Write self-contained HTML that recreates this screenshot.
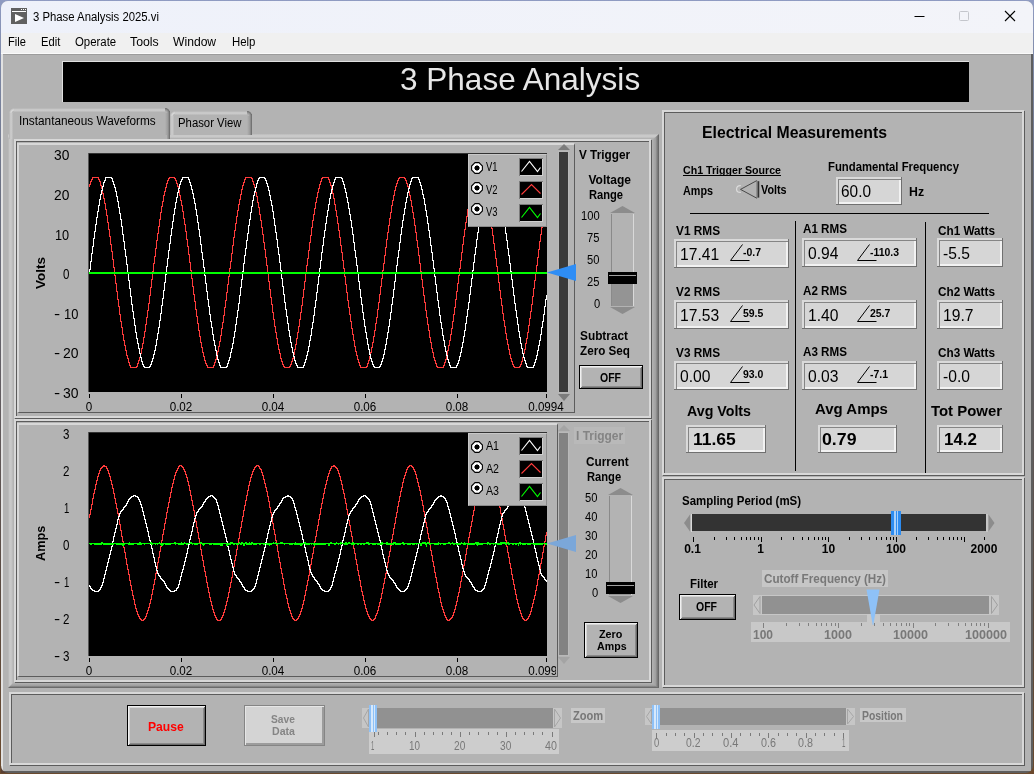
<!DOCTYPE html>
<html lang="en"><head><meta charset="utf-8"><title>3 Phase Analysis 2025.vi</title>
<style>
html,body{margin:0;padding:0;}
body{width:1034px;height:774px;overflow:hidden;position:relative;background:#6b4a32;font-family:"Liberation Sans", sans-serif;}
div,span.t,svg{position:absolute;box-sizing:content-box;}
span.t{white-space:nowrap;line-height:1;}
.fr{border:2px solid #d8d8d8;box-shadow:1px 1px 0 0 #5c5c5c, inset 1px 1px 0 0 #5c5c5c;}
.btn{background:#b3b3b3;border:1px solid #000;box-shadow:inset 1px 1px 0 0 #f0f0f0, inset -1px -1px 0 0 #6a6a6a, inset 2px 2px 0 0 #d4d4d4, inset -2px -2px 0 0 #8a8a8a;}
</style></head>
<body>
<div style="left:0px;top:0px;width:1034px;height:774px;background:linear-gradient(180deg,#8f9bc2 0,#7f8aa8 60px,#6a6f80 200px,#5a4a40 600px,#6b4a2e 100%);"></div>
<div class="win" style="left:1px;top:1px;width:1032px;height:772px;background:#b3b3b3;border-radius:7px;overflow:hidden;"></div>
<div style="left:1px;top:1px;width:1032px;height:32px;background:linear-gradient(90deg,#eef1fa,#f3f4f9);border-radius:7px 7px 0 0;"></div>
<div style="left:1px;top:33px;width:1032px;height:20px;background:#f0f0f0;"></div>
<div style="left:1px;top:53px;width:1032px;height:1px;background:#fafafa;"></div>
<div style="left:3px;top:54px;width:1028px;height:1px;background:#9c9c9c;"></div>
<div style="left:1px;top:54px;width:2px;height:718px;background:#e2e2e2;"></div>
<div style="left:1031px;top:54px;width:2px;height:718px;background:#5e5e5e;"></div>
<div style="left:3px;top:771px;width:1030px;height:2px;background:#5e5e5e;"></div>
<svg style="left:11px;top:8px;" width="16" height="16" viewBox="0 0 16 16"><rect x="0" y="0" width="16" height="16" fill="#606060"/><rect x="1" y="3" width="14" height="1" fill="#fff"/><rect x="10" y="1" width="1" height="1" fill="#fff"/><rect x="12" y="1" width="1" height="1" fill="#fff"/><rect x="14" y="1" width="1" height="1" fill="#fff"/><path d="M4 6 L13 10 L4 14 Z" fill="#fff"/></svg>
<span class="t" style="left:33.30px;top:11px;font-size:12px;font-weight:400;color:#000;transform:scaleX(0.9440);transform-origin:0 0;">3 Phase Analysis 2025.vi</span>
<svg style="left:913px;top:9px;" width="14" height="14" viewBox="0 0 14 14"><path d="M1.5 7.5 H11.5" stroke="#000" stroke-width="1" fill="none"/></svg>
<svg style="left:958px;top:10px;" width="14" height="14" viewBox="0 0 14 14"><rect x="1.5" y="1.5" width="9" height="9" rx="1" stroke="#c4c6cc" stroke-width="1" fill="none"/></svg>
<svg style="left:1003px;top:9px;" width="14" height="14" viewBox="0 0 14 14"><path d="M2 2 L12 12 M12 2 L2 12" stroke="#000" stroke-width="1.1" fill="none"/></svg>
<span class="t" style="left:8.30px;top:36px;font-size:12px;font-weight:400;color:#000;transform:scaleX(0.9239);transform-origin:0 0;">File</span>
<span class="t" style="left:40.80px;top:36px;font-size:12px;font-weight:400;color:#000;transform:scaleX(0.9309);transform-origin:0 0;">Edit</span>
<span class="t" style="left:74.60px;top:36px;font-size:12px;font-weight:400;color:#000;transform:scaleX(0.9499);transform-origin:0 0;">Operate</span>
<span class="t" style="left:130.40px;top:36px;font-size:12px;font-weight:400;color:#000;transform:scaleX(1.0250);transform-origin:0 0;">Tools</span>
<span class="t" style="left:173.30px;top:36px;font-size:12px;font-weight:400;color:#000;transform:scaleX(1.0105);transform-origin:0 0;">Window</span>
<span class="t" style="left:231.80px;top:36px;font-size:12px;font-weight:400;color:#000;transform:scaleX(0.9503);transform-origin:0 0;">Help</span>
<div style="left:62px;top:61px;width:907px;height:41px;background:#000;border-left:1px solid #e0e0e0;border-top:1px solid #e0e0e0;box-sizing:border-box;"></div>
<span class="t" style="left:400.30px;top:63px;font-size:32px;font-weight:400;color:#e6e6e6;transform:scaleX(0.9854);transform-origin:0 0;">3 Phase Analysis</span>
<div style="left:8px;top:134px;width:651px;height:554px;background:#b3b3b3;"><div style="left:0;top:0;width:5px;height:554px;background:linear-gradient(90deg,#b3b3b3,#c6c6c6 30%,#cacaca 60%,#b6b6b6);"></div><div style="left:0;top:0;width:651px;height:4px;background:linear-gradient(180deg,#bababa,#c9c9c9 35%,#c9c9c9 75%,#b8b8b8);"></div><div style="left:644px;top:0;width:7px;height:554px;background:linear-gradient(90deg,#b3b3b3,#a0a0a0 50%,#5e5e5e);clip-path:polygon(0 6px,100% 0,100% 100%,0 100%);"></div><div style="left:0;top:549px;width:651px;height:5px;background:linear-gradient(180deg,#b3b3b3,#a0a0a0 50%,#5e5e5e);clip-path:polygon(5px 0,644px 0,651px 5px,0 5px);"></div></div>
<div style="left:170px;top:111px;width:82px;height:24px;"><div style="left:0;top:0;width:82px;height:24px;background:#b3b3b3;border-radius:4px 4px 0 0;"></div><div style="left:0;top:3px;width:4px;height:21px;background:linear-gradient(90deg,#b3b3b3,#cfcfcf 50%,#b8b8b8);"></div><div style="left:3px;top:0;width:75px;height:4px;background:linear-gradient(180deg,#b3b3b3,#cfcfcf 50%,#b8b8b8);"></div><div style="left:0;top:0;width:5px;height:5px;border-radius:5px 0 0 0;background:radial-gradient(circle at 5px 5px,#b6b6b6 1.5px,#dadada 3px,#b3b3b3 5px);"></div><div style="left:77px;top:3px;width:5px;height:21px;background:linear-gradient(90deg,#b3b3b3,#9a9a9a 60%,#666);"></div><div style="left:77px;top:0;width:5px;height:5px;border-radius:0 5px 0 0;background:radial-gradient(circle at 0 5px,#b3b3b3 1.5px,#9a9a9a 3px,#666 5px);"></div></div>
<span class="t" style="left:178.40px;top:117px;font-size:12px;font-weight:400;color:#000;transform:scaleX(0.9457);transform-origin:0 0;">Phasor View</span>
<div style="left:9px;top:108px;width:161px;height:31px;"><div style="left:0;top:0;width:161px;height:31px;background:#b3b3b3;border-radius:4px 4px 0 0;"></div><div style="left:0;top:3px;width:4px;height:28px;background:linear-gradient(90deg,#b3b3b3,#cfcfcf 50%,#b8b8b8);"></div><div style="left:3px;top:0;width:154px;height:4px;background:linear-gradient(180deg,#b3b3b3,#cfcfcf 50%,#b8b8b8);"></div><div style="left:0;top:0;width:5px;height:5px;border-radius:5px 0 0 0;background:radial-gradient(circle at 5px 5px,#b6b6b6 1.5px,#dadada 3px,#b3b3b3 5px);"></div><div style="left:156px;top:3px;width:5px;height:28px;background:linear-gradient(90deg,#b3b3b3,#9a9a9a 60%,#666);"></div><div style="left:156px;top:0;width:5px;height:5px;border-radius:0 5px 0 0;background:radial-gradient(circle at 0 5px,#b3b3b3 1.5px,#9a9a9a 3px,#666 5px);"></div></div>
<span class="t" style="left:19.30px;top:115px;font-size:12px;font-weight:400;color:#000;transform:scaleX(0.9835);transform-origin:0 0;">Instantaneous Waveforms</span>
<div style="left:13px;top:135px;width:154px;height:4px;background:#b3b3b3;"></div>
<div class="fr" style="left:14px;top:139px;width:633px;height:275px;"></div>
<div class="fr" style="left:14px;top:419px;width:633px;height:259px;"></div>
<div style="left:17px;top:143px;width:558px;height:270px;box-sizing:border-box;border-left:2px solid #d8d8d8;border-top:2px solid #d8d8d8;border-right:1px solid #5c5c5c;border-bottom:1px solid #5c5c5c;"></div>
<div style="left:17px;top:423px;width:541px;height:254px;box-sizing:border-box;border-left:2px solid #d8d8d8;border-top:2px solid #d8d8d8;border-right:1px solid #5c5c5c;border-bottom:1px solid #5c5c5c;"></div>
<svg style="left:89px;top:153px;" width="458" height="239" viewBox="0 0 458 239"><rect width="458" height="239" fill="#000"/><path d="M0.5 31V34M1.5 28V32M2.5 26V29M3.5 24V27M4.5 24V25M5.5 24V25M6.5 24V25M7.5 24V25M8.5 24V25M9.5 24V27M10.5 26V29M11.5 28V33M12.5 32V36M13.5 35V41M14.5 40V46M15.5 45V51M16.5 50V57M17.5 56V63M18.5 62V70M19.5 69V77M20.5 76V84M21.5 83V92M22.5 91V99M23.5 98V107M24.5 106V115M25.5 114V123M26.5 122V131M27.5 130V139M28.5 138V147M29.5 146V154M30.5 153V162M31.5 161V169M32.5 168V175M33.5 174V182M34.5 181V188M35.5 187V193M36.5 192V198M37.5 197V203M38.5 202V206M39.5 205V210M40.5 209V213M41.5 212V215M42.5 214V215M43.5 214V215M44.5 214V215M45.5 214V215M46.5 214V215M47.5 213V215M48.5 210V214M49.5 207V211M50.5 204V208M51.5 200V205M52.5 195V201M53.5 190V196M54.5 184V191M55.5 178V185M56.5 171V179M57.5 164V172M58.5 157V165M59.5 150V158M60.5 142V151M61.5 134V143M62.5 126V135M63.5 118V127M64.5 110V119M65.5 103V111M66.5 95V104M67.5 87V96M68.5 80V88M69.5 73V81M70.5 66V74M71.5 59V67M72.5 53V60M73.5 48V54M74.5 42V49M75.5 38V43M76.5 34V39M77.5 30V35M78.5 27V31M79.5 25V28M80.5 24V26M81.5 24V25M82.5 24V25M83.5 24V25M84.5 24V25M85.5 24V26M86.5 25V28M87.5 27V31M88.5 30V34M89.5 33V38M90.5 37V43M91.5 42V48M92.5 47V53M93.5 52V59M94.5 58V66M95.5 65V72M96.5 71V79M97.5 78V87M98.5 86V94M99.5 93V102M100.5 101V110M101.5 109V118M102.5 117V126M103.5 125V134M104.5 133V142M105.5 141V149M106.5 148V157M107.5 156V164M108.5 163V171M109.5 170V178M110.5 177V184M111.5 183V190M112.5 189V195M113.5 194V200M114.5 199V204M115.5 203V208M116.5 207V211M117.5 210V213M118.5 212V215M119.5 214V215M120.5 214V215M121.5 214V215M122.5 214V215M123.5 214V215M124.5 212V215M125.5 209V213M126.5 206V210M127.5 202V207M128.5 198V203M129.5 193V199M130.5 188V194M131.5 182V189M132.5 175V183M133.5 169V176M134.5 162V170M135.5 154V163M136.5 147V155M137.5 139V148M138.5 131V140M139.5 123V132M140.5 115V124M141.5 108V116M142.5 100V109M143.5 92V101M144.5 84V93M145.5 77V85M146.5 70V78M147.5 63V71M148.5 57V64M149.5 51V58M150.5 46V52M151.5 41V47M152.5 36V42M153.5 32V37M154.5 29V33M155.5 26V30M156.5 24V27M157.5 24V25M158.5 24V25M159.5 24V25M160.5 24V25M161.5 24V25M162.5 24V26M163.5 25V29M164.5 28V32M165.5 31V35M166.5 34V40M167.5 39V44M168.5 43V50M169.5 49V55M170.5 54V62M171.5 61V68M172.5 67V75M173.5 74V82M174.5 81V90M175.5 89V97M176.5 96V105M177.5 104V113M178.5 112V121M179.5 120V129M180.5 128V137M181.5 136V145M182.5 144V152M183.5 151V160M184.5 159V167M185.5 166V174M186.5 173V180M187.5 179V186M188.5 185V192M189.5 191V197M190.5 196V201M191.5 200V206M192.5 205V209M193.5 208V212M194.5 211V214M195.5 213V215M196.5 214V215M197.5 214V215M198.5 214V215M199.5 214V215M200.5 213V215M201.5 211V214M202.5 208V212M203.5 205V209M204.5 201V206M205.5 196V202M206.5 191V197M207.5 185V192M208.5 179V186M209.5 173V180M210.5 166V174M211.5 159V167M212.5 152V160M213.5 144V153M214.5 136V145M215.5 128V137M216.5 120V129M217.5 112V121M218.5 105V113M219.5 97V106M220.5 89V98M221.5 82V90M222.5 74V83M223.5 67V75M224.5 61V68M225.5 55V62M226.5 49V56M227.5 44V50M228.5 39V45M229.5 35V40M230.5 31V36M231.5 28V32M232.5 25V29M233.5 24V26M234.5 24V25M235.5 24V25M236.5 24V25M237.5 24V25M238.5 24V25M239.5 24V27M240.5 26V30M241.5 29V33M242.5 32V37M243.5 36V41M244.5 40V46M245.5 45V52M246.5 51V58M247.5 57V64M248.5 63V71M249.5 70V78M250.5 77V85M251.5 84V93M252.5 92V100M253.5 99V108M254.5 107V116M255.5 115V124M256.5 123V132M257.5 131V140M258.5 139V148M259.5 147V155M260.5 154V162M261.5 161V169M262.5 168V176M263.5 175V182M264.5 181V188M265.5 187V194M266.5 193V199M267.5 198V203M268.5 202V207M269.5 206V210M270.5 209V213M271.5 212V215M272.5 214V215M273.5 214V215M274.5 214V215M275.5 214V215M276.5 214V215M277.5 213V215M278.5 210V214M279.5 207V211M280.5 203V208M281.5 199V204M282.5 194V200M283.5 189V195M284.5 183V190M285.5 177V184M286.5 170V178M287.5 164V171M288.5 156V165M289.5 149V157M290.5 141V150M291.5 133V142M292.5 125V134M293.5 117V126M294.5 110V118M295.5 102V111M296.5 94V103M297.5 86V95M298.5 79V87M299.5 72V80M300.5 65V73M301.5 59V66M302.5 52V60M303.5 47V53M304.5 42V48M305.5 37V43M306.5 33V38M307.5 30V34M308.5 27V31M309.5 25V28M310.5 24V26M311.5 24V25M312.5 24V25M313.5 24V25M314.5 24V25M315.5 24V26M316.5 25V28M317.5 27V31M318.5 30V34M319.5 33V39M320.5 38V43M321.5 42V48M322.5 47V54M323.5 53V60M324.5 59V66M325.5 65V73M326.5 72V80M327.5 79V88M328.5 87V95M329.5 94V103M330.5 102V111M331.5 110V119M332.5 118V127M333.5 126V135M334.5 134V143M335.5 142V150M336.5 149V158M337.5 157V165M338.5 164V172M339.5 171V178M340.5 177V185M341.5 184V190M342.5 189V196M343.5 195V200M344.5 199V205M345.5 204V208M346.5 207V211M347.5 210V214M348.5 213V215M349.5 214V215M350.5 214V215M351.5 214V215M352.5 214V215M353.5 214V215M354.5 212V215M355.5 209V213M356.5 206V210M357.5 202V207M358.5 197V203M359.5 192V198M360.5 187V193M361.5 181V188M362.5 175V182M363.5 168V176M364.5 161V169M365.5 154V162M366.5 146V155M367.5 138V147M368.5 130V139M369.5 122V131M370.5 115V123M371.5 107V116M372.5 99V108M373.5 91V100M374.5 83V92M375.5 76V84M376.5 69V77M377.5 63V70M378.5 56V64M379.5 50V57M380.5 45V51M381.5 40V46M382.5 36V41M383.5 32V37M384.5 29V33M385.5 26V30M386.5 24V27M387.5 24V25M388.5 24V25M389.5 24V25M390.5 24V25M391.5 24V25M392.5 24V27M393.5 26V29M394.5 28V32M395.5 31V36M396.5 35V40M397.5 39V45M398.5 44V50M399.5 49V56M400.5 55V62M401.5 61V69M402.5 68V76M403.5 75V83M404.5 82V91M405.5 90V98M406.5 97V106M407.5 105V114M408.5 113V122M409.5 121V130M410.5 129V138M411.5 137V146M412.5 145V153M413.5 152V161M414.5 160V168M415.5 167V174M416.5 173V181M417.5 180V187M418.5 186V192M419.5 191V197M420.5 196V202M421.5 201V206M422.5 205V209M423.5 208V212M424.5 211V214M425.5 213V215M426.5 214V215M427.5 214V215M428.5 214V215M429.5 214V215M430.5 213V215M431.5 211V214M432.5 208V212M433.5 204V209M434.5 200V205M435.5 196V201M436.5 190V197M437.5 185V191M438.5 179V186M439.5 172V180M440.5 165V173M441.5 158V166M442.5 151V159M443.5 143V152M444.5 135V144M445.5 127V136M446.5 119V128M447.5 112V120M448.5 104V113M449.5 96V105M450.5 88V97M451.5 81V89M452.5 74V82M453.5 67V75M454.5 60V68M455.5 54V61M456.5 48V55M457.5 46V49" stroke="#ff3c3c" stroke-width="1" fill="none" shape-rendering="crispEdges"/><path d="M0.5 116V121M1.5 108V117M2.5 100V109M3.5 93V101M4.5 85V94M5.5 78V86M6.5 71V79M7.5 64V72M8.5 58V65M9.5 52V59M10.5 46V53M11.5 41V47M12.5 37V42M13.5 33V38M14.5 29V34M15.5 27V30M16.5 24V28M17.5 24V25M18.5 24V25M19.5 24V25M20.5 24V25M21.5 24V25M22.5 24V26M23.5 25V29M24.5 28V32M25.5 31V35M26.5 34V39M27.5 38V44M28.5 43V49M29.5 48V55M30.5 54V61M31.5 60V67M32.5 66V74M33.5 73V82M34.5 81V89M35.5 88V97M36.5 96V104M37.5 103V112M38.5 111V120M39.5 119V128M40.5 127V136M41.5 135V144M42.5 143V152M43.5 151V159M44.5 158V166M45.5 165V173M46.5 172V180M47.5 179V186M48.5 185V191M49.5 190V196M50.5 195V201M51.5 200V205M52.5 204V209M53.5 208V212M54.5 211V214M55.5 213V215M56.5 214V215M57.5 214V215M58.5 214V215M59.5 214V215M60.5 213V215M61.5 211V214M62.5 208V212M63.5 205V209M64.5 201V206M65.5 197V202M66.5 192V198M67.5 186V193M68.5 180V187M69.5 174V181M70.5 167V175M71.5 160V168M72.5 152V161M73.5 145V153M74.5 137V146M75.5 129V138M76.5 121V130M77.5 113V122M78.5 105V114M79.5 97V106M80.5 90V98M81.5 82V91M82.5 75V83M83.5 68V76M84.5 61V69M85.5 55V62M86.5 49V56M87.5 44V50M88.5 39V45M89.5 35V40M90.5 31V36M91.5 28V32M92.5 26V29M93.5 24V27M94.5 24V25M95.5 24V25M96.5 24V25M97.5 24V25M98.5 24V25M99.5 24V27M100.5 26V30M101.5 29V33M102.5 32V37M103.5 36V41M104.5 40V46M105.5 45V51M106.5 50V57M107.5 56V63M108.5 62V70M109.5 69V77M110.5 76V84M111.5 83V92M112.5 91V100M113.5 99V107M114.5 106V115M115.5 114V123M116.5 122V131M117.5 130V139M118.5 138V147M119.5 146V154M120.5 153V162M121.5 161V169M122.5 168V175M123.5 174V182M124.5 181V188M125.5 187V193M126.5 192V198M127.5 197V203M128.5 202V207M129.5 206V210M130.5 209V213M131.5 212V215M132.5 214V215M133.5 214V215M134.5 214V215M135.5 214V215M136.5 214V215M137.5 213V215M138.5 210V214M139.5 207V211M140.5 204V208M141.5 199V205M142.5 195V200M143.5 190V196M144.5 184V191M145.5 178V185M146.5 171V179M147.5 164V172M148.5 157V165M149.5 150V158M150.5 142V151M151.5 134V143M152.5 126V135M153.5 118V127M154.5 110V119M155.5 102V111M156.5 95V103M157.5 87V96M158.5 80V88M159.5 72V81M160.5 66V73M161.5 59V67M162.5 53V60M163.5 47V54M164.5 42V48M165.5 38V43M166.5 34V39M167.5 30V35M168.5 27V31M169.5 25V28M170.5 24V26M171.5 24V25M172.5 24V25M173.5 24V25M174.5 24V25M175.5 24V26M176.5 25V28M177.5 27V31M178.5 30V34M179.5 33V38M180.5 37V43M181.5 42V48M182.5 47V53M183.5 52V59M184.5 58V66M185.5 65V73M186.5 72V80M187.5 79V87M188.5 86V95M189.5 94V102M190.5 101V110M191.5 109V118M192.5 117V126M193.5 125V134M194.5 133V142M195.5 141V150M196.5 149V157M197.5 156V164M198.5 163V171M199.5 170V178M200.5 177V184M201.5 183V190M202.5 189V195M203.5 194V200M204.5 199V204M205.5 203V208M206.5 207V211M207.5 210V213M208.5 212V215M209.5 214V215M210.5 214V215M211.5 214V215M212.5 214V215M213.5 214V215M214.5 212V215M215.5 209V213M216.5 206V210M217.5 202V207M218.5 198V203M219.5 193V199M220.5 187V194M221.5 182V188M222.5 175V183M223.5 169V176M224.5 162V170M225.5 154V163M226.5 147V155M227.5 139V148M228.5 131V140M229.5 123V132M230.5 115V124M231.5 107V116M232.5 99V108M233.5 92V100M234.5 84V93M235.5 77V85M236.5 70V78M237.5 63V71M238.5 57V64M239.5 51V58M240.5 45V52M241.5 40V46M242.5 36V41M243.5 32V37M244.5 29V33M245.5 26V30M246.5 24V27M247.5 24V25M248.5 24V25M249.5 24V25M250.5 24V25M251.5 24V25M252.5 24V26M253.5 25V29M254.5 28V32M255.5 31V36M256.5 35V40M257.5 39V45M258.5 44V50M259.5 49V56M260.5 55V62M261.5 61V68M262.5 67V75M263.5 74V82M264.5 81V90M265.5 89V98M266.5 97V105M267.5 104V113M268.5 112V121M269.5 120V129M270.5 128V137M271.5 136V145M272.5 144V152M273.5 151V160M274.5 159V167M275.5 166V174M276.5 173V180M277.5 179V186M278.5 185V192M279.5 191V197M280.5 196V202M281.5 201V206M282.5 205V209M283.5 208V212M284.5 211V214M285.5 213V215M286.5 214V215M287.5 214V215M288.5 214V215M289.5 214V215M290.5 213V215M291.5 211V214M292.5 208V212M293.5 205V209M294.5 201V206M295.5 196V202M296.5 191V197M297.5 185V192M298.5 179V186M299.5 173V180M300.5 166V174M301.5 159V167M302.5 151V160M303.5 144V152M304.5 136V145M305.5 128V137M306.5 120V129M307.5 112V121M308.5 104V113M309.5 97V105M310.5 89V98M311.5 81V90M312.5 74V82M313.5 67V75M314.5 61V68M315.5 55V62M316.5 49V56M317.5 44V50M318.5 39V45M319.5 35V40M320.5 31V36M321.5 28V32M322.5 25V29M323.5 24V26M324.5 24V25M325.5 24V25M326.5 24V25M327.5 24V25M328.5 24V25M329.5 24V27M330.5 26V30M331.5 29V33M332.5 32V37M333.5 36V42M334.5 41V46M335.5 45V52M336.5 51V58M337.5 57V64M338.5 63V71M339.5 70V78M340.5 77V85M341.5 84V93M342.5 92V100M343.5 99V108M344.5 107V116M345.5 115V124M346.5 123V132M347.5 131V140M348.5 139V148M349.5 147V155M350.5 154V163M351.5 162V170M352.5 169V176M353.5 175V183M354.5 182V188M355.5 187V194M356.5 193V199M357.5 198V203M358.5 202V207M359.5 206V210M360.5 209V213M361.5 212V215M362.5 214V215M363.5 214V215M364.5 214V215M365.5 214V215M366.5 214V215M367.5 212V215M368.5 210V213M369.5 207V211M370.5 203V208M371.5 199V204M372.5 194V200M373.5 189V195M374.5 183V190M375.5 177V184M376.5 170V178M377.5 163V171M378.5 156V164M379.5 149V157M380.5 141V150M381.5 133V142M382.5 125V134M383.5 117V126M384.5 109V118M385.5 101V110M386.5 94V102M387.5 86V95M388.5 79V87M389.5 72V80M390.5 65V73M391.5 58V66M392.5 52V59M393.5 47V53M394.5 42V48M395.5 37V43M396.5 33V38M397.5 30V34M398.5 27V31M399.5 25V28M400.5 24V26M401.5 24V25M402.5 24V25M403.5 24V25M404.5 24V25M405.5 24V26M406.5 25V28M407.5 27V31M408.5 30V35M409.5 34V39M410.5 38V43M411.5 42V48M412.5 47V54M413.5 53V60M414.5 59V67M415.5 66V73M416.5 72V81M417.5 80V88M418.5 87V96M419.5 95V103M420.5 102V111M421.5 110V119M422.5 118V127M423.5 126V135M424.5 134V143M425.5 142V151M426.5 150V158M427.5 157V165M428.5 164V172M429.5 171V179M430.5 178V185M431.5 184V191M432.5 190V196M433.5 195V201M434.5 200V205M435.5 204V208M436.5 207V211M437.5 210V214M438.5 213V215M439.5 214V215M440.5 214V215M441.5 214V215M442.5 214V215M443.5 214V215M444.5 212V215M445.5 209V213M446.5 206V210M447.5 202V207M448.5 197V203M449.5 192V198M450.5 187V193M451.5 181V188M452.5 174V182M453.5 168V175M454.5 161V169M455.5 153V162M456.5 146V154M457.5 142V147" stroke="#fff" stroke-width="1" fill="none" shape-rendering="crispEdges"/><rect x="0" y="119" width="458" height="2" fill="#00ff00"/></svg>
<div style="left:88px;top:153px;width:1px;height:239px;background:#555;"></div>
<div style="left:89px;top:153px;width:458px;height:1px;background:#333;mix-blend-mode:lighten;"></div>
<span class="t" style="left:53.80px;top:148px;font-size:14px;font-weight:400;color:#000;transform:scaleX(0.9856);transform-origin:0 0;">30</span>
<span class="t" style="left:53.80px;top:188px;font-size:14px;font-weight:400;color:#000;transform:scaleX(0.9856);transform-origin:0 0;">20</span>
<span class="t" style="left:55.00px;top:228px;font-size:14px;font-weight:400;color:#000;transform:scaleX(0.9088);transform-origin:0 0;">10</span>
<span class="t" style="left:62.80px;top:267px;font-size:14px;font-weight:400;color:#000;transform:scaleX(0.8258);transform-origin:0 0;">0</span>
<span class="t" style="left:53.90px;top:307px;font-size:14px;font-weight:400;color:#000;transform:scaleX(1.3189);transform-origin:0 0;">-</span><span class="t" style="left:64.20px;top:307px;font-size:14px;font-weight:400;color:#000;transform:scaleX(0.9216);transform-origin:0 0;">10</span>
<span class="t" style="left:53.90px;top:346px;font-size:14px;font-weight:400;color:#000;transform:scaleX(1.3189);transform-origin:0 0;">-</span><span class="t" style="left:63.00px;top:346px;font-size:14px;font-weight:400;color:#000;transform:scaleX(0.9984);transform-origin:0 0;">20</span>
<span class="t" style="left:53.90px;top:386px;font-size:14px;font-weight:400;color:#000;transform:scaleX(1.3189);transform-origin:0 0;">-</span><span class="t" style="left:63.00px;top:386px;font-size:14px;font-weight:400;color:#000;transform:scaleX(0.9984);transform-origin:0 0;">30</span>
<div style="left:89px;top:394px;width:1px;height:4px;background:#000;"></div>
<span class="t" style="left:69px;top:401px;font-size:12px;font-weight:400;color:#000;width:40px;text-align:center;transform:scaleX(0.97);transform-origin:50% 0;">0</span>
<div style="left:181px;top:394px;width:1px;height:4px;background:#000;"></div>
<span class="t" style="left:161px;top:401px;font-size:12px;font-weight:400;color:#000;width:40px;text-align:center;transform:scaleX(0.97);transform-origin:50% 0;">0.02</span>
<div style="left:273px;top:394px;width:1px;height:4px;background:#000;"></div>
<span class="t" style="left:253px;top:401px;font-size:12px;font-weight:400;color:#000;width:40px;text-align:center;transform:scaleX(0.97);transform-origin:50% 0;">0.04</span>
<div style="left:365px;top:394px;width:1px;height:4px;background:#000;"></div>
<span class="t" style="left:345px;top:401px;font-size:12px;font-weight:400;color:#000;width:40px;text-align:center;transform:scaleX(0.97);transform-origin:50% 0;">0.06</span>
<div style="left:457px;top:394px;width:1px;height:4px;background:#000;"></div>
<span class="t" style="left:437px;top:401px;font-size:12px;font-weight:400;color:#000;width:40px;text-align:center;transform:scaleX(0.97);transform-origin:50% 0;">0.08</span>
<div style="left:546px;top:394px;width:1px;height:4px;background:#000;"></div>
<span class="t" style="left:526px;top:401px;font-size:12px;font-weight:400;color:#000;width:40px;text-align:center;transform:scaleX(0.97);transform-origin:50% 0;">0.0994</span>
<span class="t" style="left:34.00px;top:288.90px;font-size:13px;font-weight:700;color:#000;transform:rotate(-90deg) scaleX(1.0364);transform-origin:0 0;">Volts</span>
<div style="left:468px;top:154px;width:79px;height:73px;background:#b3b3b3;box-sizing:border-box;border-left:1px solid #c8c8c8;border-top:1px solid #c8c8c8;border-right:1px solid #8a8a8a;border-bottom:1px solid #8a8a8a;"></div>
<svg style="left:471px;top:162px;" width="12" height="12" viewBox="0 0 12 12"><path d="M4 0.6 H8 L11.4 4 V8 L8 11.4 H4 L0.6 8 V4 Z" fill="#fff" stroke="#000" stroke-width="1.1"/><rect x="4" y="4" width="4" height="4" fill="#000"/><path d="M6 3 L9 6 L6 9 L3 6 Z" fill="#000"/></svg>
<span class="t" style="left:486.30px;top:160px;font-size:13px;font-weight:400;color:#000;transform:scaleX(0.7244);transform-origin:0 0;">V1</span>
<svg style="left:519px;top:158px;" width="24" height="18" viewBox="0 0 24 18"><rect width="24" height="18" fill="#7a7a7a"/><rect x="1" y="1" width="23" height="17" fill="#d0d0d0"/><rect x="1" y="1" width="22" height="16" fill="#000"/><path d="M2.5 13.5 L10.5 3.5 L18.5 13.5 L21.5 9.5" stroke="#fff" stroke-width="1.1" fill="none"/></svg>
<svg style="left:471px;top:182px;" width="12" height="12" viewBox="0 0 12 12"><path d="M4 0.6 H8 L11.4 4 V8 L8 11.4 H4 L0.6 8 V4 Z" fill="#fff" stroke="#000" stroke-width="1.1"/><rect x="4" y="4" width="4" height="4" fill="#000"/><path d="M6 3 L9 6 L6 9 L3 6 Z" fill="#000"/></svg>
<span class="t" style="left:486.30px;top:183px;font-size:13px;font-weight:400;color:#000;transform:scaleX(0.7244);transform-origin:0 0;">V2</span>
<svg style="left:519px;top:181px;" width="24" height="18" viewBox="0 0 24 18"><rect width="24" height="18" fill="#7a7a7a"/><rect x="1" y="1" width="23" height="17" fill="#d0d0d0"/><rect x="1" y="1" width="22" height="16" fill="#000"/><path d="M2.5 13.5 L12.5 3.5 L21.5 12.5" stroke="#ff3c3c" stroke-width="1.1" fill="none"/></svg>
<svg style="left:471px;top:203px;" width="12" height="12" viewBox="0 0 12 12"><path d="M4 0.6 H8 L11.4 4 V8 L8 11.4 H4 L0.6 8 V4 Z" fill="#fff" stroke="#000" stroke-width="1.1"/><rect x="4" y="4" width="4" height="4" fill="#000"/><path d="M6 3 L9 6 L6 9 L3 6 Z" fill="#000"/></svg>
<span class="t" style="left:486.30px;top:205px;font-size:13px;font-weight:400;color:#000;transform:scaleX(0.7244);transform-origin:0 0;">V3</span>
<svg style="left:519px;top:204px;" width="24" height="18" viewBox="0 0 24 18"><rect width="24" height="18" fill="#7a7a7a"/><rect x="1" y="1" width="23" height="17" fill="#d0d0d0"/><rect x="1" y="1" width="22" height="16" fill="#000"/><path d="M2.5 13.5 L10.5 3.5 L18.5 13.5 L21.5 9.5" stroke="#00ff00" stroke-width="1.1" fill="none"/></svg>
<svg style="left:89px;top:432px;" width="458" height="224" viewBox="0 0 458 224"><rect width="458" height="224" fill="#000"/><path d="M0.5 82V86M1.5 77V83M2.5 72V78M3.5 66V73M4.5 61V67M5.5 57V62M6.5 52V58M7.5 48V53M8.5 44V49M9.5 41V45M10.5 38V42M11.5 36V39M12.5 35V37M13.5 34V36M14.5 33V35M15.5 33V35M16.5 34V35M17.5 34V37M18.5 36V39M19.5 38V42M20.5 41V45M21.5 44V49M22.5 48V53M23.5 52V57M24.5 56V62M25.5 61V67M26.5 66V72M27.5 71V77M28.5 76V82M29.5 81V88M30.5 87V93M31.5 92V99M32.5 98V105M33.5 104V110M34.5 109V116M35.5 115V121M36.5 120V127M37.5 126V133M38.5 132V138M39.5 137V143M40.5 142V149M41.5 148V154M42.5 153V159M43.5 158V164M44.5 163V168M45.5 167V173M46.5 172V177M47.5 176V180M48.5 179V183M49.5 182V185M50.5 184V187M51.5 186V188M52.5 187V189M53.5 188V189M54.5 187V189M55.5 186V188M56.5 184V187M57.5 181V185M58.5 178V182M59.5 175V179M60.5 171V176M61.5 167V172M62.5 162V168M63.5 157V163M64.5 152V158M65.5 147V153M66.5 141V148M67.5 136V142M68.5 130V137M69.5 125V131M70.5 119V126M71.5 114V120M72.5 108V115M73.5 102V109M74.5 97V103M75.5 91V98M76.5 86V92M77.5 80V87M78.5 75V81M79.5 70V76M80.5 65V71M81.5 60V66M82.5 55V61M83.5 51V56M84.5 47V52M85.5 43V48M86.5 40V44M87.5 38V41M88.5 36V39M89.5 34V37M90.5 33V35M91.5 33V34M92.5 33V35M93.5 34V36M94.5 35V38M95.5 37V40M96.5 39V43M97.5 42V46M98.5 45V50M99.5 49V54M100.5 53V59M101.5 58V64M102.5 63V69M103.5 68V74M104.5 73V79M105.5 78V85M106.5 84V90M107.5 89V96M108.5 95V101M109.5 100V107M110.5 106V112M111.5 111V118M112.5 117V124M113.5 123V129M114.5 128V135M115.5 134V140M116.5 139V145M117.5 144V151M118.5 150V156M119.5 155V161M120.5 160V166M121.5 165V170M122.5 169V174M123.5 173V178M124.5 177V181M125.5 180V184M126.5 183V186M127.5 185V188M128.5 187V189M129.5 188V189M130.5 188V189M131.5 187V189M132.5 185V188M133.5 183V186M134.5 180V184M135.5 177V181M136.5 173V178M137.5 169V174M138.5 165V170M139.5 160V166M140.5 155V161M141.5 150V156M142.5 145V151M143.5 139V146M144.5 134V140M145.5 128V135M146.5 123V129M147.5 117V124M148.5 112V118M149.5 106V113M150.5 100V107M151.5 95V101M152.5 89V96M153.5 84V90M154.5 78V85M155.5 73V79M156.5 68V74M157.5 63V69M158.5 58V64M159.5 53V59M160.5 49V54M161.5 45V50M162.5 42V46M163.5 39V43M164.5 37V40M165.5 35V38M166.5 34V36M167.5 33V35M168.5 33V34M169.5 33V35M170.5 34V37M171.5 36V38M172.5 37V41M173.5 40V44M174.5 43V48M175.5 47V52M176.5 51V56M177.5 55V60M178.5 59V65M179.5 64V70M180.5 69V76M181.5 75V81M182.5 80V87M183.5 86V92M184.5 91V98M185.5 97V103M186.5 102V109M187.5 108V114M188.5 113V120M189.5 119V126M190.5 125V131M191.5 130V137M192.5 136V142M193.5 141V147M194.5 146V153M195.5 152V158M196.5 157V163M197.5 162V167M198.5 166V172M199.5 171V176M200.5 175V179M201.5 178V182M202.5 181V185M203.5 184V187M204.5 186V188M205.5 187V189M206.5 188V189M207.5 187V189M208.5 186V188M209.5 184V187M210.5 182V185M211.5 179V183M212.5 176V180M213.5 172V177M214.5 168V173M215.5 163V169M216.5 158V164M217.5 153V159M218.5 148V154M219.5 143V149M220.5 137V144M221.5 132V138M222.5 126V133M223.5 121V127M224.5 115V122M225.5 109V116M226.5 104V110M227.5 98V105M228.5 93V99M229.5 87V94M230.5 82V88M231.5 76V83M232.5 71V77M233.5 66V72M234.5 61V67M235.5 56V62M236.5 52V57M237.5 48V53M238.5 44V49M239.5 41V45M240.5 38V42M241.5 36V39M242.5 34V37M243.5 34V35M244.5 33V35M245.5 33V35M246.5 34V36M247.5 35V37M248.5 36V39M249.5 38V42M250.5 41V45M251.5 44V49M252.5 48V53M253.5 52V58M254.5 57V62M255.5 61V67M256.5 66V72M257.5 71V78M258.5 77V83M259.5 82V89M260.5 88V94M261.5 93V100M262.5 99V105M263.5 104V111M264.5 110V117M265.5 116V122M266.5 121V128M267.5 127V133M268.5 132V139M269.5 138V144M270.5 143V149M271.5 148V155M272.5 154V160M273.5 159V164M274.5 163V169M275.5 168V173M276.5 172V177M277.5 176V180M278.5 179V183M279.5 182V185M280.5 184V187M281.5 186V188M282.5 187V189M283.5 188V189M284.5 187V189M285.5 186V188M286.5 183V187M287.5 181V184M288.5 178V182M289.5 174V179M290.5 170V175M291.5 166V171M292.5 161V167M293.5 156V162M294.5 151V157M295.5 146V152M296.5 141V147M297.5 135V142M298.5 130V136M299.5 124V131M300.5 119V125M301.5 113V120M302.5 107V114M303.5 102V108M304.5 96V103M305.5 91V97M306.5 85V92M307.5 80V86M308.5 74V81M309.5 69V75M310.5 64V70M311.5 59V65M312.5 55V60M313.5 50V56M314.5 46V51M315.5 43V47M316.5 40V44M317.5 37V41M318.5 35V38M319.5 34V36M320.5 33V35M321.5 33V34M322.5 33V35M323.5 34V36M324.5 35V38M325.5 37V40M326.5 39V43M327.5 42V47M328.5 46V51M329.5 50V55M330.5 54V59M331.5 58V64M332.5 63V69M333.5 68V74M334.5 73V80M335.5 79V85M336.5 84V91M337.5 90V96M338.5 95V102M339.5 101V107M340.5 106V113M341.5 112V119M342.5 118V124M343.5 123V130M344.5 129V135M345.5 134V141M346.5 140V146M347.5 145V151M348.5 150V157M349.5 156V161M350.5 160V166M351.5 165V171M352.5 170V175M353.5 174V178M354.5 177V181M355.5 180V184M356.5 183V186M357.5 185V188M358.5 187V189M359.5 188V189M360.5 187V189M361.5 186V188M362.5 185V187M363.5 183V186M364.5 180V184M365.5 177V181M366.5 173V178M367.5 169V174M368.5 164V170M369.5 160V165M370.5 155V161M371.5 149V156M372.5 144V150M373.5 139V145M374.5 133V140M375.5 128V134M376.5 122V129M377.5 116V123M378.5 111V117M379.5 105V112M380.5 100V106M381.5 94V101M382.5 89V95M383.5 83V90M384.5 78V84M385.5 72V79M386.5 67V73M387.5 62V68M388.5 57V63M389.5 53V58M390.5 49V54M391.5 45V50M392.5 42V46M393.5 39V43M394.5 37V40M395.5 35V38M396.5 34V36M397.5 33V35M398.5 33V34M399.5 33V35M400.5 34V37M401.5 36V39M402.5 38V41M403.5 40V44M404.5 43V48M405.5 47V52M406.5 51V56M407.5 55V61M408.5 60V66M409.5 65V71M410.5 70V76M411.5 75V82M412.5 81V87M413.5 86V93M414.5 92V98M415.5 97V104M416.5 103V109M417.5 108V115M418.5 114V121M419.5 120V126M420.5 125V132M421.5 131V137M422.5 136V143M423.5 142V148M424.5 147V153M425.5 152V158M426.5 157V163M427.5 162V168M428.5 167V172M429.5 171V176M430.5 175V179M431.5 178V182M432.5 181V185M433.5 184V187M434.5 186V188M435.5 187V189M436.5 188V189M437.5 187V189M438.5 186V188M439.5 184V187M440.5 182V185M441.5 179V183M442.5 175V180M443.5 171V176M444.5 167V172M445.5 163V168M446.5 158V164M447.5 153V159M448.5 147V154M449.5 142V148M450.5 137V143M451.5 131V138M452.5 126V132M453.5 120V127M454.5 114V121M455.5 109V115M456.5 103V110M457.5 100V104" stroke="#ff3c3c" stroke-width="1" fill="none" shape-rendering="crispEdges"/><path d="M0.5 153V155M1.5 154V157M2.5 156V158M3.5 157V159M4.5 158V159M5.5 158V160M6.5 159V160M7.5 159V160M8.5 159V160M9.5 158V160M10.5 157V159M11.5 155V158M12.5 153V156M13.5 150V154M14.5 146V151M15.5 142V147M16.5 138V143M17.5 134V139M18.5 130V135M19.5 126V131M20.5 122V127M21.5 118V123M22.5 114V119M23.5 109V115M24.5 104V110M25.5 100V105M26.5 96V101M27.5 92V97M28.5 87V93M29.5 84V88M30.5 81V85M31.5 79V82M32.5 78V80M33.5 77V79M34.5 75V78M35.5 74V76M36.5 73V75M37.5 71V74M38.5 69V72M39.5 67V70M40.5 66V68M41.5 65V67M42.5 64V66M43.5 64V65M44.5 63V65M45.5 63V64M46.5 63V65M47.5 64V65M48.5 64V66M49.5 65V68M50.5 67V70M51.5 69V73M52.5 72V76M53.5 75V80M54.5 79V84M55.5 83V88M56.5 87V92M57.5 91V96M58.5 95V100M59.5 99V105M60.5 104V109M61.5 108V113M62.5 112V117M63.5 116V122M64.5 121V126M65.5 125V131M66.5 130V135M67.5 134V139M68.5 138V142M69.5 141V144M70.5 143V145M71.5 144V147M72.5 146V148M73.5 147V149M74.5 148V150M75.5 149V152M76.5 151V154M77.5 153V156M78.5 155V157M79.5 156V158M80.5 157V159M81.5 158V160M82.5 159V160M83.5 159V160M84.5 159V160M85.5 158V160M86.5 158V159M87.5 156V159M88.5 155V157M89.5 152V156M90.5 148V153M91.5 144V149M92.5 140V145M93.5 137V141M94.5 133V138M95.5 129V134M96.5 125V130M97.5 121V126M98.5 116V122M99.5 112V117M100.5 107V113M101.5 103V108M102.5 99V104M103.5 94V100M104.5 90V95M105.5 86V91M106.5 83V87M107.5 80V84M108.5 79V81M109.5 77V80M110.5 76V78M111.5 75V77M112.5 74V76M113.5 72V75M114.5 70V73M115.5 69V71M116.5 67V70M117.5 66V68M118.5 65V67M119.5 64V66M120.5 64V65M121.5 63V65M122.5 63V64M123.5 63V65M124.5 64V66M125.5 65V67M126.5 66V68M127.5 67V71M128.5 70V74M129.5 73V78M130.5 77V82M131.5 81V86M132.5 85V90M133.5 89V94M134.5 93V98M135.5 97V102M136.5 101V106M137.5 105V110M138.5 109V115M139.5 114V119M140.5 118V124M141.5 123V128M142.5 127V132M143.5 131V136M144.5 135V140M145.5 139V143M146.5 142V144M147.5 143V146M148.5 145V147M149.5 146V148M150.5 147V150M151.5 149V151M152.5 150V153M153.5 152V155M154.5 154V156M155.5 155V158M156.5 157V159M157.5 158V159M158.5 158V160M159.5 159V160M160.5 159V160M161.5 159V160M162.5 158V160M163.5 157V159M164.5 156V158M165.5 154V157M166.5 151V155M167.5 147V152M168.5 143V148M169.5 139V144M170.5 135V140M171.5 131V136M172.5 127V132M173.5 123V128M174.5 119V124M175.5 115V120M176.5 110V116M177.5 106V111M178.5 101V107M179.5 97V102M180.5 93V98M181.5 89V94M182.5 85V90M183.5 82V86M184.5 80V83M185.5 78V81M186.5 77V79M187.5 76V78M188.5 74V77M189.5 73V75M190.5 71V74M191.5 70V72M192.5 68V71M193.5 66V69M194.5 65V67M195.5 65V66M196.5 64V66M197.5 64V65M198.5 63V65M199.5 63V65M200.5 64V65M201.5 64V66M202.5 65V67M203.5 66V69M204.5 68V72M205.5 71V76M206.5 75V79M207.5 78V83M208.5 82V87M209.5 86V91M210.5 90V95M211.5 94V99M212.5 98V103M213.5 102V108M214.5 107V112M215.5 111V116M216.5 115V121M217.5 120V125M218.5 124V129M219.5 128V134M220.5 133V138M221.5 137V141M222.5 140V143M223.5 142V145M224.5 144V146M225.5 145V148M226.5 147V149M227.5 148V150M228.5 149V152M229.5 151V153M230.5 152V155M231.5 154V157M232.5 156V158M233.5 157V159M234.5 158V159M235.5 158V160M236.5 159V160M237.5 159V160M238.5 159V160M239.5 158V160M240.5 157V159M241.5 155V158M242.5 153V156M243.5 149V154M244.5 145V150M245.5 141V146M246.5 138V142M247.5 134V139M248.5 130V135M249.5 126V131M250.5 122V127M251.5 117V123M252.5 113V118M253.5 108V114M254.5 104V109M255.5 100V105M256.5 95V101M257.5 91V96M258.5 87V92M259.5 83V88M260.5 81V84M261.5 79V82M262.5 78V80M263.5 76V79M264.5 75V77M265.5 74V76M266.5 72V75M267.5 71V73M268.5 69V72M269.5 67V70M270.5 66V68M271.5 65V67M272.5 64V66M273.5 64V65M274.5 63V65M275.5 63V64M276.5 63V65M277.5 64V66M278.5 65V67M279.5 66V68M280.5 67V70M281.5 69V73M282.5 72V77M283.5 76V81M284.5 80V85M285.5 84V89M286.5 88V93M287.5 92V97M288.5 96V101M289.5 100V105M290.5 104V109M291.5 108V114M292.5 113V118M293.5 117V123M294.5 122V127M295.5 126V131M296.5 130V135M297.5 134V139M298.5 138V142M299.5 141V144M300.5 143V146M301.5 145V147M302.5 146V148M303.5 147V149M304.5 148V151M305.5 150V152M306.5 151V154M307.5 153V156M308.5 155V157M309.5 156V158M310.5 157V159M311.5 158V160M312.5 159V160M313.5 159V160M314.5 159V160M315.5 158V160M316.5 157V159M317.5 156V158M318.5 154V157M319.5 151V155M320.5 148V152M321.5 144V149M322.5 140V145M323.5 136V141M324.5 132V137M325.5 128V133M326.5 124V129M327.5 120V125M328.5 116V121M329.5 111V117M330.5 107V112M331.5 102V108M332.5 98V103M333.5 94V99M334.5 90V95M335.5 86V91M336.5 82V87M337.5 80V83M338.5 79V81M339.5 77V80M340.5 76V78M341.5 75V77M342.5 73V76M343.5 72V74M344.5 70V73M345.5 68V71M346.5 67V69M347.5 66V68M348.5 65V67M349.5 64V66M350.5 64V65M351.5 63V65M352.5 63V65M353.5 64V65M354.5 64V66M355.5 65V67M356.5 66V69M357.5 68V71M358.5 70V75M359.5 74V78M360.5 77V82M361.5 81V86M362.5 85V90M363.5 89V94M364.5 93V98M365.5 97V102M366.5 101V107M367.5 106V111M368.5 110V115M369.5 114V120M370.5 119V124M371.5 123V128M372.5 127V133M373.5 132V137M374.5 136V140M375.5 139V143M376.5 142V145M377.5 144V146M378.5 145V147M379.5 146V148M380.5 147V150M381.5 149V151M382.5 150V153M383.5 152V155M384.5 154V156M385.5 155V158M386.5 157V159M387.5 158V159M388.5 158V160M389.5 159V160M390.5 159V160M391.5 159V160M392.5 158V160M393.5 157V159M394.5 156V158M395.5 153V157M396.5 150V154M397.5 146V151M398.5 142V147M399.5 138V143M400.5 135V139M401.5 131V136M402.5 127V132M403.5 123V128M404.5 119V124M405.5 114V120M406.5 110V115M407.5 105V111M408.5 101V106M409.5 96V102M410.5 92V97M411.5 88V93M412.5 84V89M413.5 81V85M414.5 80V82M415.5 78V81M416.5 77V79M417.5 76V78M418.5 74V77M419.5 73V75M420.5 71V74M421.5 69V72M422.5 68V70M423.5 66V69M424.5 65V67M425.5 65V66M426.5 64V66M427.5 63V65M428.5 63V64M429.5 63V65M430.5 64V65M431.5 64V66M432.5 65V67M433.5 66V69M434.5 68V72M435.5 71V76M436.5 75V80M437.5 79V84M438.5 83V88M439.5 87V92M440.5 91V96M441.5 95V100M442.5 99V104M443.5 103V108M444.5 107V113M445.5 112V117M446.5 116V121M447.5 120V126M448.5 125V130M449.5 129V134M450.5 133V138M451.5 137V142M452.5 141V144M453.5 143V145M454.5 144V146M455.5 145V148M456.5 147V149M457.5 148V150" stroke="#fff" stroke-width="1" fill="none" shape-rendering="crispEdges"/><rect x="0" y="111" width="458" height="1" fill="#00ff00"/><path d="M0.5 111V112M1.5 111V113M2.5 111V113M3.5 111V112M4.5 111V112M5.5 111V113M6.5 111V113M7.5 111V113M8.5 112V113M9.5 111V113M10.5 111V113M11.5 111V113M12.5 110V113M13.5 110V112M14.5 111V113M15.5 111V113M16.5 111V113M17.5 112V113M18.5 111V113M19.5 111V113M20.5 111V113M21.5 111V113M22.5 111V113M23.5 111V113M24.5 111V113M25.5 111V112M26.5 111V112M27.5 111V113M28.5 111V113M29.5 112V113M30.5 111V113M31.5 111V113M32.5 111V113M33.5 111V114M34.5 111V114M35.5 111V113M36.5 111V112M37.5 111V112M38.5 111V112M39.5 111V113M40.5 110V113M41.5 111V113M42.5 111V113M43.5 111V113M44.5 111V113M45.5 111V112M46.5 111V112M47.5 111V112M48.5 111V113M49.5 111V113M50.5 110V113M51.5 110V113M52.5 111V113M53.5 111V112M54.5 111V112M55.5 111V113M56.5 111V112M57.5 111V112M58.5 111V112M59.5 111V112M60.5 111V112M61.5 110V112M62.5 110V113M63.5 111V113M64.5 111V112M65.5 111V112M66.5 111V113M67.5 111V112M68.5 111V113M69.5 111V112M70.5 110V112M71.5 111V113M72.5 111V114M73.5 111V114M74.5 111V113M75.5 111V112M76.5 111V113M77.5 111V113M78.5 111V113M79.5 111V113M80.5 111V113M81.5 111V113M82.5 111V112M83.5 111V112M84.5 111V112M85.5 110V112M86.5 110V113M87.5 111V112M88.5 111V112M89.5 111V113M90.5 111V113M91.5 112V113M92.5 110V113M93.5 111V113M94.5 111V113M95.5 110V112M96.5 111V112M97.5 111V113M98.5 111V113M99.5 111V112M100.5 111V112M101.5 110V112M102.5 110V112M103.5 111V113M104.5 111V112M105.5 111V113M106.5 112V113M107.5 111V113M108.5 111V113M109.5 111V112M110.5 111V112M111.5 110V112M112.5 110V112M113.5 111V113M114.5 111V114M115.5 111V113M116.5 111V112M117.5 111V112M118.5 111V112M119.5 111V112M120.5 111V113M121.5 111V113M122.5 111V113M123.5 111V112M124.5 111V113M125.5 112V113M126.5 111V113M127.5 112V113M128.5 112V113M129.5 111V113M130.5 112V113M131.5 111V114M132.5 111V114M133.5 111V114M134.5 111V112M135.5 111V112M136.5 111V112M137.5 111V114M138.5 111V114M139.5 111V113M140.5 111V113M141.5 110V113M142.5 110V112M143.5 110V112M144.5 111V113M145.5 111V113M146.5 111V112M147.5 111V113M148.5 111V113M149.5 111V113M150.5 110V112M151.5 111V113M152.5 110V113M153.5 110V112M154.5 111V114M155.5 111V114M156.5 110V112M157.5 110V113M158.5 111V113M159.5 111V113M160.5 110V113M161.5 111V113M162.5 110V113M163.5 110V112M164.5 111V113M165.5 111V113M166.5 111V113M167.5 111V113M168.5 111V112M169.5 111V112M170.5 111V113M171.5 111V113M172.5 111V112M173.5 111V112M174.5 111V113M175.5 111V113M176.5 111V112M177.5 111V113M178.5 111V113M179.5 111V113M180.5 111V114M181.5 111V113M182.5 111V113M183.5 111V112M184.5 110V112M185.5 111V112M186.5 110V112M187.5 111V113M188.5 111V113M189.5 111V112M190.5 111V112M191.5 110V112M192.5 110V112M193.5 110V112M194.5 111V112M195.5 111V113M196.5 111V112M197.5 111V112M198.5 111V112M199.5 111V112M200.5 111V113M201.5 112V113M202.5 112V113M203.5 111V113M204.5 111V112M205.5 111V113M206.5 110V113M207.5 111V113M208.5 112V113M209.5 111V113M210.5 111V113M211.5 111V114M212.5 112V114M213.5 111V113M214.5 111V112M215.5 110V112M216.5 110V113M217.5 112V113M218.5 111V113M219.5 111V113M220.5 111V113M221.5 111V112M222.5 111V113M223.5 111V112M224.5 111V113M225.5 112V114M226.5 112V113M227.5 111V113M228.5 112V113M229.5 111V113M230.5 111V113M231.5 111V113M232.5 111V113M233.5 112V113M234.5 112V113M235.5 111V113M236.5 111V113M237.5 111V112M238.5 111V112M239.5 111V114M240.5 111V114M241.5 110V112M242.5 110V112M243.5 111V112M244.5 111V112M245.5 111V113M246.5 111V113M247.5 110V112M248.5 111V112M249.5 111V113M250.5 111V112M251.5 110V113M252.5 110V112M253.5 111V112M254.5 111V112M255.5 111V113M256.5 110V113M257.5 110V113M258.5 111V113M259.5 110V112M260.5 110V112M261.5 111V112M262.5 111V113M263.5 110V113M264.5 110V113M265.5 111V113M266.5 111V112M267.5 111V112M268.5 111V113M269.5 111V113M270.5 111V112M271.5 111V113M272.5 111V113M273.5 111V112M274.5 111V113M275.5 111V113M276.5 111V112M277.5 110V112M278.5 110V112M279.5 110V113M280.5 111V113M281.5 111V112M282.5 111V112M283.5 111V113M284.5 111V113M285.5 111V113M286.5 111V113M287.5 111V112M288.5 111V113M289.5 111V113M290.5 111V113M291.5 111V113M292.5 110V113M293.5 110V113M294.5 111V112M295.5 111V112M296.5 111V112M297.5 110V113M298.5 110V113M299.5 111V113M300.5 111V113M301.5 111V113M302.5 111V113M303.5 112V113M304.5 110V113M305.5 110V112M306.5 110V113M307.5 111V113M308.5 111V113M309.5 111V113M310.5 111V113M311.5 111V113M312.5 111V112M313.5 110V112M314.5 110V113M315.5 111V113M316.5 111V112M317.5 111V112M318.5 111V113M319.5 111V113M320.5 111V113M321.5 111V113M322.5 111V112M323.5 111V113M324.5 111V113M325.5 111V113M326.5 111V112M327.5 111V113M328.5 111V112M329.5 111V112M330.5 111V112M331.5 111V114M332.5 111V114M333.5 110V112M334.5 110V112M335.5 110V112M336.5 110V113M337.5 111V115M338.5 110V112M339.5 110V112M340.5 111V113M341.5 111V113M342.5 111V112M343.5 111V112M344.5 111V112M345.5 111V113M346.5 111V113M347.5 111V113M348.5 111V113M349.5 110V113M350.5 111V112M351.5 111V113M352.5 111V112M353.5 111V112M354.5 111V113M355.5 112V113M356.5 111V113M357.5 111V112M358.5 111V112M359.5 110V112M360.5 110V112M361.5 111V113M362.5 111V112M363.5 110V112M364.5 111V113M365.5 111V113M366.5 111V112M367.5 111V113M368.5 111V113M369.5 112V113M370.5 111V113M371.5 111V113M372.5 110V112M373.5 111V112M374.5 111V113M375.5 110V113M376.5 111V113M377.5 111V112M378.5 111V113M379.5 111V113M380.5 111V113M381.5 112V113M382.5 111V113M383.5 111V113M384.5 111V113M385.5 111V113M386.5 110V112M387.5 110V113M388.5 110V114M389.5 110V113M390.5 111V113M391.5 111V113M392.5 111V113M393.5 111V113M394.5 111V112M395.5 111V112M396.5 111V112M397.5 111V112M398.5 110V113M399.5 110V112M400.5 111V113M401.5 111V113M402.5 111V112M403.5 111V112M404.5 111V113M405.5 111V112M406.5 111V113M407.5 111V112M408.5 111V113M409.5 111V113M410.5 111V113M411.5 110V113M412.5 110V113M413.5 110V112M414.5 110V112M415.5 110V112M416.5 110V113M417.5 111V113M418.5 110V112M419.5 110V113M420.5 111V113M421.5 111V112M422.5 111V112M423.5 111V113M424.5 111V113M425.5 111V112M426.5 111V113M427.5 111V113M428.5 111V112M429.5 111V114M430.5 110V112M431.5 110V113M432.5 111V112M433.5 111V113M434.5 111V113M435.5 111V113M436.5 111V113M437.5 111V112M438.5 111V113M439.5 111V113M440.5 111V113M441.5 111V113M442.5 111V112M443.5 111V112M444.5 111V113M445.5 112V113M446.5 111V113M447.5 111V113M448.5 111V113M449.5 111V113M450.5 111V113M451.5 111V113M452.5 111V113M453.5 111V113M454.5 111V112M455.5 111V112M456.5 111V113M457.5 111V113" stroke="#00ff00" stroke-width="1" fill="none" shape-rendering="crispEdges"/></svg>
<div style="left:88px;top:432px;width:1px;height:224px;background:#555;"></div>
<div style="left:89px;top:432px;width:458px;height:1px;background:#333;mix-blend-mode:lighten;"></div>
<span class="t" style="left:62.80px;top:427px;font-size:14px;font-weight:400;color:#000;transform:scaleX(0.8258);transform-origin:0 0;">3</span>
<span class="t" style="left:62.80px;top:464px;font-size:14px;font-weight:400;color:#000;transform:scaleX(0.8258);transform-origin:0 0;">2</span>
<span class="t" style="left:63.90px;top:501px;font-size:14px;font-weight:400;color:#000;transform:scaleX(0.6839);transform-origin:0 0;">1</span>
<span class="t" style="left:62.80px;top:538px;font-size:14px;font-weight:400;color:#000;transform:scaleX(0.8258);transform-origin:0 0;">0</span>
<span class="t" style="left:53.90px;top:575px;font-size:14px;font-weight:400;color:#000;transform:scaleX(1.3189);transform-origin:0 0;">-</span><span class="t" style="left:63.90px;top:575px;font-size:14px;font-weight:400;color:#000;transform:scaleX(0.6839);transform-origin:0 0;">1</span>
<span class="t" style="left:53.90px;top:612px;font-size:14px;font-weight:400;color:#000;transform:scaleX(1.3189);transform-origin:0 0;">-</span><span class="t" style="left:62.80px;top:612px;font-size:14px;font-weight:400;color:#000;transform:scaleX(0.8258);transform-origin:0 0;">2</span>
<span class="t" style="left:53.90px;top:649px;font-size:14px;font-weight:400;color:#000;transform:scaleX(1.3189);transform-origin:0 0;">-</span><span class="t" style="left:62.80px;top:649px;font-size:14px;font-weight:400;color:#000;transform:scaleX(0.8258);transform-origin:0 0;">3</span>
<div style="left:89px;top:658px;width:1px;height:4px;background:#000;"></div>
<span class="t" style="left:69px;top:665px;font-size:12px;font-weight:400;color:#000;width:40px;text-align:center;transform:scaleX(0.97);transform-origin:50% 0;">0</span>
<div style="left:181px;top:658px;width:1px;height:4px;background:#000;"></div>
<span class="t" style="left:161px;top:665px;font-size:12px;font-weight:400;color:#000;width:40px;text-align:center;transform:scaleX(0.97);transform-origin:50% 0;">0.02</span>
<div style="left:273px;top:658px;width:1px;height:4px;background:#000;"></div>
<span class="t" style="left:253px;top:665px;font-size:12px;font-weight:400;color:#000;width:40px;text-align:center;transform:scaleX(0.97);transform-origin:50% 0;">0.04</span>
<div style="left:365px;top:658px;width:1px;height:4px;background:#000;"></div>
<span class="t" style="left:345px;top:665px;font-size:12px;font-weight:400;color:#000;width:40px;text-align:center;transform:scaleX(0.97);transform-origin:50% 0;">0.06</span>
<div style="left:457px;top:658px;width:1px;height:4px;background:#000;"></div>
<span class="t" style="left:437px;top:665px;font-size:12px;font-weight:400;color:#000;width:40px;text-align:center;transform:scaleX(0.97);transform-origin:50% 0;">0.08</span>
<div style="left:546px;top:658px;width:1px;height:4px;background:#000;"></div>
<div style="left:520px;top:662px;width:36px;height:14px;overflow:hidden;"><span class="t" style="left:6px;top:3px;width:40px;text-align:center;font-size:12px;transform:scaleX(0.97);transform-origin:50% 0;">0.0994</span></div>
<span class="t" style="left:34.00px;top:561.00px;font-size:13px;font-weight:700;color:#000;transform:rotate(-90deg) scaleX(0.9744);transform-origin:0 0;">Amps</span>
<div style="left:468px;top:433px;width:79px;height:73px;background:#b3b3b3;box-sizing:border-box;border-left:1px solid #c8c8c8;border-top:1px solid #c8c8c8;border-right:1px solid #8a8a8a;border-bottom:1px solid #8a8a8a;"></div>
<svg style="left:471px;top:441px;" width="12" height="12" viewBox="0 0 12 12"><path d="M4 0.6 H8 L11.4 4 V8 L8 11.4 H4 L0.6 8 V4 Z" fill="#fff" stroke="#000" stroke-width="1.1"/><rect x="4" y="4" width="4" height="4" fill="#000"/><path d="M6 3 L9 6 L6 9 L3 6 Z" fill="#000"/></svg>
<span class="t" style="left:486.30px;top:439px;font-size:13px;font-weight:400;color:#000;transform:scaleX(0.8189);transform-origin:0 0;">A1</span>
<svg style="left:519px;top:437px;" width="24" height="18" viewBox="0 0 24 18"><rect width="24" height="18" fill="#7a7a7a"/><rect x="1" y="1" width="23" height="17" fill="#d0d0d0"/><rect x="1" y="1" width="22" height="16" fill="#000"/><path d="M2.5 13.5 L10.5 3.5 L18.5 13.5 L21.5 9.5" stroke="#fff" stroke-width="1.1" fill="none"/></svg>
<svg style="left:471px;top:461px;" width="12" height="12" viewBox="0 0 12 12"><path d="M4 0.6 H8 L11.4 4 V8 L8 11.4 H4 L0.6 8 V4 Z" fill="#fff" stroke="#000" stroke-width="1.1"/><rect x="4" y="4" width="4" height="4" fill="#000"/><path d="M6 3 L9 6 L6 9 L3 6 Z" fill="#000"/></svg>
<span class="t" style="left:486.30px;top:462px;font-size:13px;font-weight:400;color:#000;transform:scaleX(0.8189);transform-origin:0 0;">A2</span>
<svg style="left:519px;top:460px;" width="24" height="18" viewBox="0 0 24 18"><rect width="24" height="18" fill="#7a7a7a"/><rect x="1" y="1" width="23" height="17" fill="#d0d0d0"/><rect x="1" y="1" width="22" height="16" fill="#000"/><path d="M2.5 13.5 L12.5 3.5 L21.5 12.5" stroke="#ff3c3c" stroke-width="1.1" fill="none"/></svg>
<svg style="left:471px;top:482px;" width="12" height="12" viewBox="0 0 12 12"><path d="M4 0.6 H8 L11.4 4 V8 L8 11.4 H4 L0.6 8 V4 Z" fill="#fff" stroke="#000" stroke-width="1.1"/><rect x="4" y="4" width="4" height="4" fill="#000"/><path d="M6 3 L9 6 L6 9 L3 6 Z" fill="#000"/></svg>
<span class="t" style="left:486.30px;top:484px;font-size:13px;font-weight:400;color:#000;transform:scaleX(0.8189);transform-origin:0 0;">A3</span>
<svg style="left:519px;top:483px;" width="24" height="18" viewBox="0 0 24 18"><rect width="24" height="18" fill="#7a7a7a"/><rect x="1" y="1" width="23" height="17" fill="#d0d0d0"/><rect x="1" y="1" width="22" height="16" fill="#000"/><path d="M2.5 13.5 L10.5 3.5 L18.5 13.5 L21.5 9.5" stroke="#00ff00" stroke-width="1.1" fill="none"/></svg>
<div style="left:558px;top:151px;width:11px;height:242px;background:#b9b9b9;"></div>
<div style="left:559px;top:152px;width:9px;height:240px;background:#3a3a3a;"></div>
<svg style="left:558px;top:144px;" width="12" height="6" viewBox="0 0 12 6"><path d="M0 6 L6 0 L12 6 Z" fill="#7c7c7c"/></svg>
<svg style="left:558px;top:394px;" width="12" height="7" viewBox="0 0 12 7"><path d="M0 0 L12 0 L6 7 Z" fill="#7c7c7c"/></svg>
<div style="left:558px;top:432px;width:11px;height:224px;background:#b9b9b9;"></div>
<div style="left:559px;top:433px;width:9px;height:222px;background:#828282;"></div>
<svg style="left:558px;top:425px;" width="12" height="6" viewBox="0 0 12 6"><path d="M0 6 L6 0 L12 6 Z" fill="#a4a4a4"/></svg>
<svg style="left:558px;top:657px;" width="12" height="7" viewBox="0 0 12 7"><path d="M0 0 L12 0 L6 7 Z" fill="#a4a4a4"/></svg>
<svg style="left:547px;top:264px;" width="29" height="17" viewBox="0 0 29 17"><path d="M0 8.5 L29 0 L29 17 Z" fill="#2e8df5"/></svg>
<svg style="left:547px;top:535px;" width="29" height="17" viewBox="0 0 29 17"><path d="M0 8.5 L29 0 L29 17 Z" fill="#7ba7d9"/></svg>
<span class="t" style="left:578.50px;top:149px;font-size:12px;font-weight:700;color:#000;transform:scaleX(0.9808);transform-origin:0 0;">V Trigger</span>
<span class="t" style="left:588.50px;top:174px;font-size:12px;font-weight:700;color:#000;">Voltage</span>
<span class="t" style="left:588.50px;top:189px;font-size:12px;font-weight:700;color:#000;transform:scaleX(0.9283);transform-origin:0 0;">Range</span>
<div style="left:574px;top:427px;width:51px;height:17px;background:#b9b9b9;"></div>
<span class="t" style="left:575.70px;top:430px;font-size:12px;font-weight:700;color:#848484;transform:scaleX(0.9963);transform-origin:0 0;">I Trigger</span>
<span class="t" style="left:586.30px;top:456px;font-size:12px;font-weight:700;color:#000;transform:scaleX(0.9844);transform-origin:0 0;">Current</span>
<span class="t" style="left:586.50px;top:471px;font-size:12px;font-weight:700;color:#000;transform:scaleX(0.9311);transform-origin:0 0;">Range</span>
<span class="t" style="left:580.00px;top:330px;font-size:12px;font-weight:700;color:#000;transform:scaleX(0.9871);transform-origin:0 0;">Subtract</span>
<span class="t" style="left:580.00px;top:345px;font-size:12px;font-weight:700;color:#000;transform:scaleX(0.9732);transform-origin:0 0;">Zero Seq</span>
<div style="left:611px;top:214px;width:23px;height:92px;background:#b3b3b3;border-left:1px solid #8a8a8a;border-right:1px solid #d9d9d9;box-sizing:border-box;"></div>
<div style="left:612px;top:278px;width:21px;height:28px;background:#949494;"></div>
<svg style="left:610px;top:206px;" width="25" height="7" viewBox="0 0 25 7"><path d="M0 7 L12.5 0 L25 7 Z" fill="#8c8c8c"/></svg>
<svg style="left:610px;top:307px;" width="25" height="7" viewBox="0 0 25 7"><path d="M0 0 L25 0 L12.5 7 Z" fill="#8c8c8c"/></svg>
<div style="left:608px;top:272px;width:29px;height:12px;background:#000;"></div>
<div style="left:609px;top:275px;width:27px;height:1px;background:#a0a0a0;"></div>
<span class="t" style="left:581.10px;top:210px;font-size:12px;font-weight:400;color:#000;transform:scaleX(0.9300);transform-origin:0 0;">100</span>
<span class="t" style="left:587.26px;top:232px;font-size:12px;font-weight:400;color:#000;transform:scaleX(0.9300);transform-origin:0 0;">75</span>
<span class="t" style="left:587.26px;top:254px;font-size:12px;font-weight:400;color:#000;transform:scaleX(0.9300);transform-origin:0 0;">50</span>
<span class="t" style="left:587.26px;top:276px;font-size:12px;font-weight:400;color:#000;transform:scaleX(0.9300);transform-origin:0 0;">25</span>
<span class="t" style="left:593.54px;top:298px;font-size:12px;font-weight:400;color:#000;transform:scaleX(0.9300);transform-origin:0 0;">0</span>
<div style="left:609px;top:496px;width:23px;height:99px;background:#b3b3b3;border-left:1px solid #8a8a8a;border-right:1px solid #d9d9d9;box-sizing:border-box;"></div>
<div style="left:610px;top:588px;width:21px;height:7px;background:#949494;"></div>
<svg style="left:608px;top:488px;" width="25" height="7" viewBox="0 0 25 7"><path d="M0 7 L12.5 0 L25 7 Z" fill="#8c8c8c"/></svg>
<svg style="left:608px;top:596px;" width="25" height="7" viewBox="0 0 25 7"><path d="M0 0 L25 0 L12.5 7 Z" fill="#8c8c8c"/></svg>
<div style="left:606px;top:582px;width:29px;height:12px;background:#000;"></div>
<div style="left:607px;top:585px;width:27px;height:1px;background:#a0a0a0;"></div>
<span class="t" style="left:585.26px;top:492px;font-size:12px;font-weight:400;color:#000;transform:scaleX(0.9300);transform-origin:0 0;">50</span>
<span class="t" style="left:585.26px;top:511px;font-size:12px;font-weight:400;color:#000;transform:scaleX(0.9300);transform-origin:0 0;">40</span>
<span class="t" style="left:585.26px;top:530px;font-size:12px;font-weight:400;color:#000;transform:scaleX(0.9300);transform-origin:0 0;">30</span>
<span class="t" style="left:585.26px;top:549px;font-size:12px;font-weight:400;color:#000;transform:scaleX(0.9300);transform-origin:0 0;">20</span>
<span class="t" style="left:585.26px;top:568px;font-size:12px;font-weight:400;color:#000;transform:scaleX(0.9300);transform-origin:0 0;">10</span>
<span class="t" style="left:591.54px;top:587px;font-size:12px;font-weight:400;color:#000;transform:scaleX(0.9300);transform-origin:0 0;">0</span>
<div class="btn" style="left:579px;top:365px;width:62px;height:22px;background:#b3b3b3;"></div>
<span class="t" style="left:600.00px;top:372px;font-size:12px;font-weight:700;color:#000;transform:scaleX(0.8750);transform-origin:0 0;">OFF</span>
<div class="btn" style="left:584px;top:622px;width:52px;height:34px;background:#b3b3b3;"></div>
<span class="t" style="left:599.30px;top:629px;font-size:11px;font-weight:700;color:#000;transform:scaleX(0.9801);transform-origin:0 0;">Zero</span>
<span class="t" style="left:596.50px;top:641px;font-size:11px;font-weight:700;color:#000;transform:scaleX(0.9672);transform-origin:0 0;">Amps</span>
<div class="fr" style="left:662px;top:110px;width:358px;height:361px;"></div>
<div class="fr" style="left:662px;top:477px;width:358px;height:206px;"></div>
<span class="t" style="left:702.00px;top:125px;font-size:16px;font-weight:700;color:#000;transform:scaleX(0.9860);transform-origin:0 0;">Electrical Measurements</span>
<span class="t" style="left:683.00px;top:165px;font-size:11px;font-weight:700;color:#000;transform:scaleX(0.9655);transform-origin:0 0;text-decoration:underline;text-underline-offset:1px;text-decoration-skip-ink:none;">Ch1 Trigger Source</span>
<span class="t" style="left:683.00px;top:185px;font-size:12px;font-weight:700;color:#000;transform:scaleX(0.8989);transform-origin:0 0;">Amps</span>
<span class="t" style="left:761.40px;top:184px;font-size:12px;font-weight:700;color:#000;transform:scaleX(0.8982);transform-origin:0 0;">Volts</span>
<svg style="left:735px;top:180px;" width="28" height="20" viewBox="0 0 28 20"><path d="M5.5 9.4 L21.8 0.6 M5.5 9.4 L21.8 18.2" stroke="#3c3c3c" stroke-width="0.9" fill="none"/><path d="M23.4 1.2 V17.6" stroke="#333" stroke-width="1.7"/><path d="M21.9 0.6 V18.2" stroke="#555" stroke-width="0.6"/><path d="M5.8 5.6 Q1.4 5.4 1.6 9.4 Q1.6 12.6 5.8 12.4" fill="none" stroke="#dcdcdc" stroke-width="1.2"/></svg>
<span class="t" style="left:828.00px;top:161px;font-size:12px;font-weight:700;color:#000;transform:scaleX(0.9441);transform-origin:0 0;">Fundamental Frequency</span>
<div style="left:836px;top:177px;width:66px;height:28px;"><div style="left:0;top:0;width:66px;height:28px;background:#dadada;"></div><div style="left:2px;top:2px;width:63px;height:25px;background:#858585;"></div><div style="left:3px;top:3px;width:62px;height:24px;background:#f2f2f2;"></div><div style="left:0;top:27px;width:66px;height:1px;background:#707070;"></div><div style="left:65px;top:0;width:1px;height:28px;background:#707070;"></div><div style="left:3px;top:3px;width:60px;height:22px;background:#d6d6d6;"></div></div>
<span class="t" style="left:841.00px;top:183px;font-size:17px;font-weight:400;color:#000;transform:scaleX(0.9057);transform-origin:0 0;">60.0</span>
<span class="t" style="left:909.00px;top:186px;font-size:12px;font-weight:700;color:#000;transform:scaleX(1.0256);transform-origin:0 0;">Hz</span>
<div style="left:690px;top:213px;width:299px;height:1px;background:#000;"></div>
<div style="left:795px;top:221px;width:1px;height:250px;background:#000;"></div>
<div style="left:925px;top:222px;width:1px;height:251px;background:#000;"></div>
<span class="t" style="left:676.00px;top:225px;font-size:12px;font-weight:700;color:#000;transform:scaleX(0.9860);transform-origin:0 0;">V1 RMS</span>
<div style="left:674px;top:239px;width:115px;height:29px;"><div style="left:0;top:0;width:115px;height:29px;background:#dadada;"></div><div style="left:2px;top:2px;width:112px;height:26px;background:#858585;"></div><div style="left:3px;top:3px;width:111px;height:25px;background:#f2f2f2;"></div><div style="left:0;top:28px;width:115px;height:1px;background:#707070;"></div><div style="left:114px;top:0;width:1px;height:29px;background:#707070;"></div><div style="left:3px;top:3px;width:109px;height:23px;background:#d6d6d6;"></div></div>
<span class="t" style="left:680.00px;top:246px;font-size:17px;font-weight:400;color:#000;transform:scaleX(0.9200);transform-origin:0 0;">17.41</span>
<svg style="left:730px;top:244px;" width="22" height="18" viewBox="0 0 22 18"><path d="M12.5 0.5 L0.5 16.5 H19.5" stroke="#000" stroke-width="1" fill="none"/></svg>
<span class="t" style="left:743.00px;top:247px;font-size:11px;font-weight:700;color:#000;transform:scaleX(0.9500);transform-origin:0 0;">-0.7</span>
<span class="t" style="left:803.00px;top:223px;font-size:12px;font-weight:700;color:#000;transform:scaleX(0.9697);transform-origin:0 0;">A1 RMS</span>
<div style="left:802px;top:238px;width:115px;height:29px;"><div style="left:0;top:0;width:115px;height:29px;background:#dadada;"></div><div style="left:2px;top:2px;width:112px;height:26px;background:#858585;"></div><div style="left:3px;top:3px;width:111px;height:25px;background:#f2f2f2;"></div><div style="left:0;top:28px;width:115px;height:1px;background:#707070;"></div><div style="left:114px;top:0;width:1px;height:29px;background:#707070;"></div><div style="left:3px;top:3px;width:109px;height:23px;background:#d6d6d6;"></div></div>
<span class="t" style="left:807.60px;top:245px;font-size:17px;font-weight:400;color:#000;transform:scaleX(0.9200);transform-origin:0 0;">0.94</span>
<svg style="left:857px;top:244px;" width="22" height="18" viewBox="0 0 22 18"><path d="M12.5 0.5 L0.5 16.5 H19.5" stroke="#000" stroke-width="1" fill="none"/></svg>
<span class="t" style="left:869.50px;top:247px;font-size:11px;font-weight:700;color:#000;transform:scaleX(0.9500);transform-origin:0 0;">-110.3</span>
<span class="t" style="left:938.00px;top:225px;font-size:12px;font-weight:700;color:#000;transform:scaleX(0.9785);transform-origin:0 0;">Ch1 Watts</span>
<div style="left:937px;top:238px;width:66px;height:29px;"><div style="left:0;top:0;width:66px;height:29px;background:#dadada;"></div><div style="left:2px;top:2px;width:63px;height:26px;background:#858585;"></div><div style="left:3px;top:3px;width:62px;height:25px;background:#f2f2f2;"></div><div style="left:0;top:28px;width:66px;height:1px;background:#707070;"></div><div style="left:65px;top:0;width:1px;height:29px;background:#707070;"></div><div style="left:3px;top:3px;width:60px;height:23px;background:#d6d6d6;"></div></div>
<span class="t" style="left:943.00px;top:245px;font-size:17px;font-weight:400;color:#000;transform:scaleX(0.9200);transform-origin:0 0;">-5.5</span>
<span class="t" style="left:676.00px;top:286px;font-size:12px;font-weight:700;color:#000;transform:scaleX(0.9860);transform-origin:0 0;">V2 RMS</span>
<div style="left:674px;top:300px;width:115px;height:29px;"><div style="left:0;top:0;width:115px;height:29px;background:#dadada;"></div><div style="left:2px;top:2px;width:112px;height:26px;background:#858585;"></div><div style="left:3px;top:3px;width:111px;height:25px;background:#f2f2f2;"></div><div style="left:0;top:28px;width:115px;height:1px;background:#707070;"></div><div style="left:114px;top:0;width:1px;height:29px;background:#707070;"></div><div style="left:3px;top:3px;width:109px;height:23px;background:#d6d6d6;"></div></div>
<span class="t" style="left:680.00px;top:307px;font-size:17px;font-weight:400;color:#000;transform:scaleX(0.9200);transform-origin:0 0;">17.53</span>
<svg style="left:730px;top:305px;" width="22" height="18" viewBox="0 0 22 18"><path d="M12.5 0.5 L0.5 16.5 H19.5" stroke="#000" stroke-width="1" fill="none"/></svg>
<span class="t" style="left:743.00px;top:308px;font-size:11px;font-weight:700;color:#000;transform:scaleX(0.9500);transform-origin:0 0;">59.5</span>
<span class="t" style="left:803.00px;top:285px;font-size:12px;font-weight:700;color:#000;transform:scaleX(0.9697);transform-origin:0 0;">A2 RMS</span>
<div style="left:802px;top:300px;width:115px;height:29px;"><div style="left:0;top:0;width:115px;height:29px;background:#dadada;"></div><div style="left:2px;top:2px;width:112px;height:26px;background:#858585;"></div><div style="left:3px;top:3px;width:111px;height:25px;background:#f2f2f2;"></div><div style="left:0;top:28px;width:115px;height:1px;background:#707070;"></div><div style="left:114px;top:0;width:1px;height:29px;background:#707070;"></div><div style="left:3px;top:3px;width:109px;height:23px;background:#d6d6d6;"></div></div>
<span class="t" style="left:807.60px;top:307px;font-size:17px;font-weight:400;color:#000;transform:scaleX(0.9200);transform-origin:0 0;">1.40</span>
<svg style="left:857px;top:305px;" width="22" height="18" viewBox="0 0 22 18"><path d="M12.5 0.5 L0.5 16.5 H19.5" stroke="#000" stroke-width="1" fill="none"/></svg>
<span class="t" style="left:869.50px;top:308px;font-size:11px;font-weight:700;color:#000;transform:scaleX(0.9500);transform-origin:0 0;">25.7</span>
<span class="t" style="left:938.00px;top:286px;font-size:12px;font-weight:700;color:#000;transform:scaleX(0.9785);transform-origin:0 0;">Ch2 Watts</span>
<div style="left:937px;top:300px;width:66px;height:29px;"><div style="left:0;top:0;width:66px;height:29px;background:#dadada;"></div><div style="left:2px;top:2px;width:63px;height:26px;background:#858585;"></div><div style="left:3px;top:3px;width:62px;height:25px;background:#f2f2f2;"></div><div style="left:0;top:28px;width:66px;height:1px;background:#707070;"></div><div style="left:65px;top:0;width:1px;height:29px;background:#707070;"></div><div style="left:3px;top:3px;width:60px;height:23px;background:#d6d6d6;"></div></div>
<span class="t" style="left:943.00px;top:307px;font-size:17px;font-weight:400;color:#000;transform:scaleX(0.9200);transform-origin:0 0;">19.7</span>
<span class="t" style="left:676.00px;top:347px;font-size:12px;font-weight:700;color:#000;transform:scaleX(0.9860);transform-origin:0 0;">V3 RMS</span>
<div style="left:674px;top:361px;width:115px;height:29px;"><div style="left:0;top:0;width:115px;height:29px;background:#dadada;"></div><div style="left:2px;top:2px;width:112px;height:26px;background:#858585;"></div><div style="left:3px;top:3px;width:111px;height:25px;background:#f2f2f2;"></div><div style="left:0;top:28px;width:115px;height:1px;background:#707070;"></div><div style="left:114px;top:0;width:1px;height:29px;background:#707070;"></div><div style="left:3px;top:3px;width:109px;height:23px;background:#d6d6d6;"></div></div>
<span class="t" style="left:680.00px;top:368px;font-size:17px;font-weight:400;color:#000;transform:scaleX(0.9200);transform-origin:0 0;">0.00</span>
<svg style="left:730px;top:366px;" width="22" height="18" viewBox="0 0 22 18"><path d="M12.5 0.5 L0.5 16.5 H19.5" stroke="#000" stroke-width="1" fill="none"/></svg>
<span class="t" style="left:743.00px;top:369px;font-size:11px;font-weight:700;color:#000;transform:scaleX(0.9500);transform-origin:0 0;">93.0</span>
<span class="t" style="left:803.00px;top:346px;font-size:12px;font-weight:700;color:#000;transform:scaleX(0.9697);transform-origin:0 0;">A3 RMS</span>
<div style="left:802px;top:361px;width:115px;height:29px;"><div style="left:0;top:0;width:115px;height:29px;background:#dadada;"></div><div style="left:2px;top:2px;width:112px;height:26px;background:#858585;"></div><div style="left:3px;top:3px;width:111px;height:25px;background:#f2f2f2;"></div><div style="left:0;top:28px;width:115px;height:1px;background:#707070;"></div><div style="left:114px;top:0;width:1px;height:29px;background:#707070;"></div><div style="left:3px;top:3px;width:109px;height:23px;background:#d6d6d6;"></div></div>
<span class="t" style="left:807.60px;top:368px;font-size:17px;font-weight:400;color:#000;transform:scaleX(0.9200);transform-origin:0 0;">0.03</span>
<svg style="left:857px;top:366px;" width="22" height="18" viewBox="0 0 22 18"><path d="M12.5 0.5 L0.5 16.5 H19.5" stroke="#000" stroke-width="1" fill="none"/></svg>
<span class="t" style="left:869.50px;top:369px;font-size:11px;font-weight:700;color:#000;transform:scaleX(0.9500);transform-origin:0 0;">-7.1</span>
<span class="t" style="left:938.00px;top:347px;font-size:12px;font-weight:700;color:#000;transform:scaleX(0.9785);transform-origin:0 0;">Ch3 Watts</span>
<div style="left:937px;top:361px;width:66px;height:29px;"><div style="left:0;top:0;width:66px;height:29px;background:#dadada;"></div><div style="left:2px;top:2px;width:63px;height:26px;background:#858585;"></div><div style="left:3px;top:3px;width:62px;height:25px;background:#f2f2f2;"></div><div style="left:0;top:28px;width:66px;height:1px;background:#707070;"></div><div style="left:65px;top:0;width:1px;height:29px;background:#707070;"></div><div style="left:3px;top:3px;width:60px;height:23px;background:#d6d6d6;"></div></div>
<span class="t" style="left:943.00px;top:368px;font-size:17px;font-weight:400;color:#000;transform:scaleX(0.9200);transform-origin:0 0;">-0.0</span>
<span class="t" style="left:687.00px;top:403px;font-size:15px;font-weight:700;color:#000;transform:scaleX(0.9481);transform-origin:0 0;">Avg Volts</span>
<div style="left:686px;top:425px;width:80px;height:28px;"><div style="left:0;top:0;width:80px;height:28px;background:#dadada;"></div><div style="left:2px;top:2px;width:77px;height:25px;background:#858585;"></div><div style="left:3px;top:3px;width:76px;height:24px;background:#f2f2f2;"></div><div style="left:0;top:27px;width:80px;height:1px;background:#707070;"></div><div style="left:79px;top:0;width:1px;height:28px;background:#707070;"></div><div style="left:3px;top:3px;width:74px;height:22px;background:#d6d6d6;"></div></div>
<span class="t" style="left:692.50px;top:432px;font-size:16px;font-weight:700;color:#000;transform:scaleX(1.0939);transform-origin:0 0;">11.65</span>
<span class="t" style="left:815.00px;top:401px;font-size:15px;font-weight:700;color:#000;transform:scaleX(0.9983);transform-origin:0 0;">Avg Amps</span>
<div style="left:818px;top:425px;width:79px;height:28px;"><div style="left:0;top:0;width:79px;height:28px;background:#dadada;"></div><div style="left:2px;top:2px;width:76px;height:25px;background:#858585;"></div><div style="left:3px;top:3px;width:75px;height:24px;background:#f2f2f2;"></div><div style="left:0;top:27px;width:79px;height:1px;background:#707070;"></div><div style="left:78px;top:0;width:1px;height:28px;background:#707070;"></div><div style="left:3px;top:3px;width:73px;height:22px;background:#d6d6d6;"></div></div>
<span class="t" style="left:822.40px;top:432px;font-size:16px;font-weight:700;color:#000;transform:scaleX(1.1084);transform-origin:0 0;">0.79</span>
<span class="t" style="left:931.00px;top:403px;font-size:15px;font-weight:700;color:#000;transform:scaleX(0.9947);transform-origin:0 0;">Tot Power</span>
<div style="left:937px;top:425px;width:66px;height:28px;"><div style="left:0;top:0;width:66px;height:28px;background:#dadada;"></div><div style="left:2px;top:2px;width:63px;height:25px;background:#858585;"></div><div style="left:3px;top:3px;width:62px;height:24px;background:#f2f2f2;"></div><div style="left:0;top:27px;width:66px;height:1px;background:#707070;"></div><div style="left:65px;top:0;width:1px;height:28px;background:#707070;"></div><div style="left:3px;top:3px;width:60px;height:22px;background:#d6d6d6;"></div></div>
<span class="t" style="left:943.50px;top:432px;font-size:16px;font-weight:700;color:#000;transform:scaleX(1.0570);transform-origin:0 0;">14.2</span>
<span class="t" style="left:682.00px;top:495px;font-size:12px;font-weight:700;color:#000;transform:scaleX(0.9549);transform-origin:0 0;">Sampling Period (mS)</span>
<div style="left:692px;top:514px;width:294px;height:17px;background:#333;"></div>
<svg style="left:684px;top:514px;" width="8" height="18" viewBox="0 0 8 18"><path d="M0 9 L6 0.5 V17.5 Z" fill="#8c8c8c"/><path d="M7.5 0 V18" stroke="#d8d8d8" stroke-width="1"/></svg>
<svg style="left:986px;top:514px;" width="9" height="18" viewBox="0 0 9 18"><path d="M1 0 V18" stroke="#d8d8d8" stroke-width="1"/><path d="M2.5 0.5 L8.5 9 L2.5 17.5 Z" fill="#8c8c8c"/></svg>
<div style="left:891px;top:511px;width:10px;height:24px;background:linear-gradient(90deg,#2d8cf0 0 30%,#a8d0fa 30% 50%,#2d8cf0 50% 60%, #a8d0fa 60% 65%, #2d8cf0 65%);"></div>
<div style="left:693px;top:537px;width:1px;height:5px;background:#000;"></div>
<div style="left:714px;top:537px;width:1px;height:3px;background:#000;"></div>
<div style="left:726px;top:537px;width:1px;height:3px;background:#000;"></div>
<div style="left:734px;top:537px;width:1px;height:3px;background:#000;"></div>
<div style="left:741px;top:537px;width:1px;height:3px;background:#000;"></div>
<div style="left:746px;top:537px;width:1px;height:3px;background:#000;"></div>
<div style="left:750px;top:537px;width:1px;height:3px;background:#000;"></div>
<div style="left:754px;top:537px;width:1px;height:3px;background:#000;"></div>
<div style="left:758px;top:537px;width:1px;height:3px;background:#000;"></div>
<div style="left:761px;top:537px;width:1px;height:5px;background:#000;"></div>
<div style="left:781px;top:537px;width:1px;height:3px;background:#000;"></div>
<div style="left:793px;top:537px;width:1px;height:3px;background:#000;"></div>
<div style="left:802px;top:537px;width:1px;height:3px;background:#000;"></div>
<div style="left:808px;top:537px;width:1px;height:3px;background:#000;"></div>
<div style="left:814px;top:537px;width:1px;height:3px;background:#000;"></div>
<div style="left:818px;top:537px;width:1px;height:3px;background:#000;"></div>
<div style="left:822px;top:537px;width:1px;height:3px;background:#000;"></div>
<div style="left:825px;top:537px;width:1px;height:3px;background:#000;"></div>
<div style="left:828px;top:537px;width:1px;height:5px;background:#000;"></div>
<div style="left:849px;top:537px;width:1px;height:3px;background:#000;"></div>
<div style="left:861px;top:537px;width:1px;height:3px;background:#000;"></div>
<div style="left:869px;top:537px;width:1px;height:3px;background:#000;"></div>
<div style="left:876px;top:537px;width:1px;height:3px;background:#000;"></div>
<div style="left:881px;top:537px;width:1px;height:3px;background:#000;"></div>
<div style="left:886px;top:537px;width:1px;height:3px;background:#000;"></div>
<div style="left:890px;top:537px;width:1px;height:3px;background:#000;"></div>
<div style="left:893px;top:537px;width:1px;height:3px;background:#000;"></div>
<div style="left:896px;top:537px;width:1px;height:5px;background:#000;"></div>
<div style="left:916px;top:537px;width:1px;height:3px;background:#000;"></div>
<div style="left:928px;top:537px;width:1px;height:3px;background:#000;"></div>
<div style="left:937px;top:537px;width:1px;height:3px;background:#000;"></div>
<div style="left:943px;top:537px;width:1px;height:3px;background:#000;"></div>
<div style="left:949px;top:537px;width:1px;height:3px;background:#000;"></div>
<div style="left:953px;top:537px;width:1px;height:3px;background:#000;"></div>
<div style="left:957px;top:537px;width:1px;height:3px;background:#000;"></div>
<div style="left:961px;top:537px;width:1px;height:3px;background:#000;"></div>
<div style="left:964px;top:537px;width:1px;height:5px;background:#000;"></div>
<div style="left:984px;top:537px;width:1px;height:3px;background:#000;"></div>
<span class="t" style="left:684.19px;top:543px;font-size:12px;font-weight:700;color:#000;">0.1</span>
<span class="t" style="left:757.19px;top:543px;font-size:12px;font-weight:700;color:#000;">1</span>
<span class="t" style="left:821.81px;top:543px;font-size:12px;font-weight:700;color:#000;">10</span>
<span class="t" style="left:886.00px;top:543px;font-size:12px;font-weight:700;color:#000;">100</span>
<span class="t" style="left:970.62px;top:543px;font-size:12px;font-weight:700;color:#000;">2000</span>
<span class="t" style="left:689.60px;top:578px;font-size:12px;font-weight:700;color:#000;transform:scaleX(0.9566);transform-origin:0 0;">Filter</span>
<div class="btn" style="left:679px;top:594px;width:55px;height:24px;background:#b3b3b3;"></div>
<span class="t" style="left:696.00px;top:601px;font-size:12px;font-weight:700;color:#000;transform:scaleX(0.8750);transform-origin:0 0;">OFF</span>
<div style="left:762px;top:570px;width:126px;height:17px;background:#c6c6c6;"></div>
<span class="t" style="left:764.00px;top:573px;font-size:12px;font-weight:700;color:#787878;transform:scaleX(0.9731);transform-origin:0 0;">Cutoff Frequency (Hz)</span>
<div style="left:753px;top:595px;width:246px;height:20px;background:#c6c6c6;"></div>
<div style="left:762px;top:596px;width:227px;height:18px;background:#919191;"></div>
<svg style="left:753px;top:596px;" width="9" height="18" viewBox="0 0 9 18"><path d="M1 9 L7 0.5 V17.5 Z" fill="#c6c6c6" stroke="#a0a0a0" stroke-width="1"/></svg>
<svg style="left:990px;top:596px;" width="9" height="18" viewBox="0 0 9 18"><path d="M1.5 0.5 L7.5 9 L1.5 17.5 Z" fill="#c6c6c6" stroke="#a0a0a0" stroke-width="1"/></svg>
<div style="left:751px;top:622px;width:259px;height:20px;background:#c8c8c8;"></div>
<div style="left:867px;top:614px;width:13px;height:8px;background:#c8c8c8;"></div>
<div style="left:763px;top:623px;width:1px;height:5px;background:#808080;"></div>
<div style="left:786px;top:623px;width:1px;height:3px;background:#808080;"></div>
<div style="left:799px;top:623px;width:1px;height:3px;background:#808080;"></div>
<div style="left:808px;top:623px;width:1px;height:3px;background:#808080;"></div>
<div style="left:816px;top:623px;width:1px;height:3px;background:#808080;"></div>
<div style="left:821px;top:623px;width:1px;height:3px;background:#808080;"></div>
<div style="left:826px;top:623px;width:1px;height:3px;background:#808080;"></div>
<div style="left:831px;top:623px;width:1px;height:3px;background:#808080;"></div>
<div style="left:835px;top:623px;width:1px;height:3px;background:#808080;"></div>
<div style="left:838px;top:623px;width:1px;height:5px;background:#808080;"></div>
<div style="left:861px;top:623px;width:1px;height:3px;background:#808080;"></div>
<div style="left:874px;top:623px;width:1px;height:3px;background:#808080;"></div>
<div style="left:883px;top:623px;width:1px;height:3px;background:#808080;"></div>
<div style="left:890px;top:623px;width:1px;height:3px;background:#808080;"></div>
<div style="left:896px;top:623px;width:1px;height:3px;background:#808080;"></div>
<div style="left:901px;top:623px;width:1px;height:3px;background:#808080;"></div>
<div style="left:906px;top:623px;width:1px;height:3px;background:#808080;"></div>
<div style="left:909px;top:623px;width:1px;height:3px;background:#808080;"></div>
<div style="left:913px;top:623px;width:1px;height:5px;background:#808080;"></div>
<div style="left:935px;top:623px;width:1px;height:3px;background:#808080;"></div>
<div style="left:948px;top:623px;width:1px;height:3px;background:#808080;"></div>
<div style="left:958px;top:623px;width:1px;height:3px;background:#808080;"></div>
<div style="left:965px;top:623px;width:1px;height:3px;background:#808080;"></div>
<div style="left:971px;top:623px;width:1px;height:3px;background:#808080;"></div>
<div style="left:976px;top:623px;width:1px;height:3px;background:#808080;"></div>
<div style="left:980px;top:623px;width:1px;height:3px;background:#808080;"></div>
<div style="left:984px;top:623px;width:1px;height:3px;background:#808080;"></div>
<div style="left:988px;top:623px;width:1px;height:5px;background:#808080;"></div>
<span class="t" style="left:753.00px;top:629px;font-size:12px;font-weight:700;color:#787878;">100</span>
<span class="t" style="left:824.00px;top:629px;font-size:12px;font-weight:700;color:#787878;transform:scaleX(1.0467);transform-origin:0 0;">1000</span>
<span class="t" style="left:893.00px;top:629px;font-size:12px;font-weight:700;color:#787878;transform:scaleX(1.0487);transform-origin:0 0;">10000</span>
<span class="t" style="left:965.00px;top:629px;font-size:12px;font-weight:700;color:#787878;transform:scaleX(1.0500);transform-origin:0 0;">100000</span>
<svg style="left:866px;top:589px;" width="14" height="37" viewBox="0 0 14 37"><path d="M0.5 0.5 H13.5 L7.3 36 H6.7 Z" fill="#8ec1f7"/></svg>
<div class="fr" style="left:9px;top:692px;width:1011px;height:69px;"></div>
<div class="btn" style="left:127px;top:705px;width:77px;height:39px;background:#b3b3b3;"></div>
<span class="t" style="left:148.40px;top:720px;font-size:13px;font-weight:700;color:#ff0000;transform:scaleX(0.9333);transform-origin:0 0;">Pause</span>
<div style="left:244px;top:705px;width:81px;height:41px;background:#d4d4d4;box-sizing:border-box;border:1px solid #858585;box-shadow:inset 1px 1px 0 0 #e6e6e6, inset -2px -2px 0 0 #9c9c9c;"></div>
<span class="t" style="left:271.30px;top:714px;font-size:11px;font-weight:700;color:#858585;transform:scaleX(0.9282);transform-origin:0 0;">Save</span>
<span class="t" style="left:271.70px;top:726px;font-size:11px;font-weight:700;color:#858585;transform:scaleX(0.9625);transform-origin:0 0;">Data</span>
<div style="left:362px;top:708px;width:200px;height:20px;background:#c6c6c6;"></div>
<div style="left:370px;top:708px;width:183px;height:20px;background:#919191;"></div>
<svg style="left:362px;top:708px;" width="8" height="20" viewBox="0 0 8 20"><path d="M1.5 10.0 L6.5 1 V19 Z" fill="#c6c6c6" stroke="#a6a6a6" stroke-width="1"/></svg>
<svg style="left:553px;top:708px;" width="9" height="20" viewBox="0 0 9 20"><path d="M1.5 1 L7.5 10.0 L1.5 19 Z" fill="#c6c6c6" stroke="#a6a6a6" stroke-width="1"/></svg>
<div style="left:369px;top:729px;width:190px;height:25px;background:#cdcdcd;"></div>
<div style="left:374px;top:732px;width:1px;height:5px;background:#7a7a7a;"></div>
<div style="left:378px;top:732px;width:1px;height:3px;background:#7a7a7a;"></div>
<div style="left:387px;top:732px;width:1px;height:3px;background:#7a7a7a;"></div>
<div style="left:396px;top:732px;width:1px;height:3px;background:#7a7a7a;"></div>
<div style="left:405px;top:732px;width:1px;height:3px;background:#7a7a7a;"></div>
<div style="left:415px;top:732px;width:1px;height:5px;background:#7a7a7a;"></div>
<div style="left:424px;top:732px;width:1px;height:3px;background:#7a7a7a;"></div>
<div style="left:433px;top:732px;width:1px;height:3px;background:#7a7a7a;"></div>
<div style="left:442px;top:732px;width:1px;height:3px;background:#7a7a7a;"></div>
<div style="left:451px;top:732px;width:1px;height:3px;background:#7a7a7a;"></div>
<div style="left:460px;top:732px;width:1px;height:5px;background:#7a7a7a;"></div>
<div style="left:469px;top:732px;width:1px;height:3px;background:#7a7a7a;"></div>
<div style="left:478px;top:732px;width:1px;height:3px;background:#7a7a7a;"></div>
<div style="left:488px;top:732px;width:1px;height:3px;background:#7a7a7a;"></div>
<div style="left:497px;top:732px;width:1px;height:3px;background:#7a7a7a;"></div>
<div style="left:506px;top:732px;width:1px;height:5px;background:#7a7a7a;"></div>
<div style="left:515px;top:732px;width:1px;height:3px;background:#7a7a7a;"></div>
<div style="left:524px;top:732px;width:1px;height:3px;background:#7a7a7a;"></div>
<div style="left:533px;top:732px;width:1px;height:3px;background:#7a7a7a;"></div>
<div style="left:542px;top:732px;width:1px;height:3px;background:#7a7a7a;"></div>
<div style="left:552px;top:732px;width:1px;height:5px;background:#7a7a7a;"></div>
<span class="t" style="left:371.00px;top:740px;font-size:12px;font-weight:400;color:#787878;transform:scaleX(0.4981);transform-origin:0 0;">1</span>
<span class="t" style="left:409.00px;top:740px;font-size:12px;font-weight:400;color:#787878;transform:scaleX(0.8224);transform-origin:0 0;">10</span>
<span class="t" style="left:454.30px;top:740px;font-size:12px;font-weight:400;color:#787878;transform:scaleX(0.8449);transform-origin:0 0;">20</span>
<span class="t" style="left:499.60px;top:740px;font-size:12px;font-weight:400;color:#787878;transform:scaleX(0.8449);transform-origin:0 0;">30</span>
<span class="t" style="left:544.80px;top:740px;font-size:12px;font-weight:400;color:#787878;transform:scaleX(0.8897);transform-origin:0 0;">40</span>
<div style="left:369px;top:705px;width:8px;height:27px;background:linear-gradient(90deg,#8ec1f7 0 25%,#d6e8fb 25% 50%,#8ec1f7 50% 62%,#d6e8fb 62% 75%,#8ec1f7 75%);"></div>
<div style="left:571px;top:708px;width:34px;height:15px;background:#c8c8c8;"></div>
<span class="t" style="left:572.50px;top:710px;font-size:12px;font-weight:700;color:#787878;transform:scaleX(0.9257);transform-origin:0 0;">Zoom</span>
<div style="left:645px;top:708px;width:210px;height:17px;background:#c6c6c6;"></div>
<div style="left:653px;top:708px;width:193px;height:17px;background:#919191;"></div>
<svg style="left:645px;top:708px;" width="8" height="17" viewBox="0 0 8 17"><path d="M1.5 8.5 L6.5 1 V16 Z" fill="#c6c6c6" stroke="#a6a6a6" stroke-width="1"/></svg>
<svg style="left:846px;top:708px;" width="9" height="17" viewBox="0 0 9 17"><path d="M1.5 1 L7.5 8.5 L1.5 16 Z" fill="#c6c6c6" stroke="#a6a6a6" stroke-width="1"/></svg>
<div style="left:652px;top:730px;width:197px;height:21px;background:#cdcdcd;"></div>
<div style="left:656px;top:733px;width:1px;height:5px;background:#7a7a7a;"></div>
<div style="left:666px;top:733px;width:1px;height:3px;background:#7a7a7a;"></div>
<div style="left:675px;top:733px;width:1px;height:3px;background:#7a7a7a;"></div>
<div style="left:684px;top:733px;width:1px;height:3px;background:#7a7a7a;"></div>
<div style="left:694px;top:733px;width:1px;height:5px;background:#7a7a7a;"></div>
<div style="left:703px;top:733px;width:1px;height:3px;background:#7a7a7a;"></div>
<div style="left:712px;top:733px;width:1px;height:3px;background:#7a7a7a;"></div>
<div style="left:722px;top:733px;width:1px;height:3px;background:#7a7a7a;"></div>
<div style="left:731px;top:733px;width:1px;height:5px;background:#7a7a7a;"></div>
<div style="left:740px;top:733px;width:1px;height:3px;background:#7a7a7a;"></div>
<div style="left:750px;top:733px;width:1px;height:3px;background:#7a7a7a;"></div>
<div style="left:759px;top:733px;width:1px;height:3px;background:#7a7a7a;"></div>
<div style="left:768px;top:733px;width:1px;height:5px;background:#7a7a7a;"></div>
<div style="left:778px;top:733px;width:1px;height:3px;background:#7a7a7a;"></div>
<div style="left:787px;top:733px;width:1px;height:3px;background:#7a7a7a;"></div>
<div style="left:796px;top:733px;width:1px;height:3px;background:#7a7a7a;"></div>
<div style="left:806px;top:733px;width:1px;height:5px;background:#7a7a7a;"></div>
<div style="left:815px;top:733px;width:1px;height:3px;background:#7a7a7a;"></div>
<div style="left:824px;top:733px;width:1px;height:3px;background:#7a7a7a;"></div>
<div style="left:834px;top:733px;width:1px;height:3px;background:#7a7a7a;"></div>
<div style="left:843px;top:733px;width:1px;height:5px;background:#7a7a7a;"></div>
<span class="t" style="left:653.60px;top:737px;font-size:12px;font-weight:400;color:#787878;transform:scaleX(0.7849);transform-origin:0 0;">0</span>
<span class="t" style="left:686.40px;top:737px;font-size:12px;font-weight:400;color:#787878;transform:scaleX(0.8662);transform-origin:0 0;">0.2</span>
<span class="t" style="left:723.00px;top:737px;font-size:12px;font-weight:400;color:#787878;transform:scaleX(0.9263);transform-origin:0 0;">0.4</span>
<span class="t" style="left:760.90px;top:737px;font-size:12px;font-weight:400;color:#787878;transform:scaleX(0.8962);transform-origin:0 0;">0.6</span>
<span class="t" style="left:798.30px;top:737px;font-size:12px;font-weight:400;color:#787878;transform:scaleX(0.8962);transform-origin:0 0;">0.8</span>
<span class="t" style="left:841.80px;top:737px;font-size:12px;font-weight:400;color:#787878;transform:scaleX(0.5132);transform-origin:0 0;">1</span>
<div style="left:652px;top:705px;width:8px;height:24px;background:linear-gradient(90deg,#8ec1f7 0 25%,#d6e8fb 25% 50%,#8ec1f7 50% 62%,#d6e8fb 62% 75%,#8ec1f7 75%);"></div>
<div style="left:860px;top:708px;width:46px;height:14px;background:#c8c8c8;"></div>
<span class="t" style="left:862.00px;top:710px;font-size:12px;font-weight:700;color:#787878;transform:scaleX(0.8654);transform-origin:0 0;">Position</span>
<div style="left:1026px;top:766px;width:7px;height:7px;background:radial-gradient(circle at 0 0, rgba(0,0,0,0) 6.3px, #6e4a2c 7.3px);"></div>
<div style="left:1px;top:766px;width:7px;height:7px;background:radial-gradient(circle at 100% 0, rgba(0,0,0,0) 6.3px, #5a4034 7.3px);"></div>
</body></html>
